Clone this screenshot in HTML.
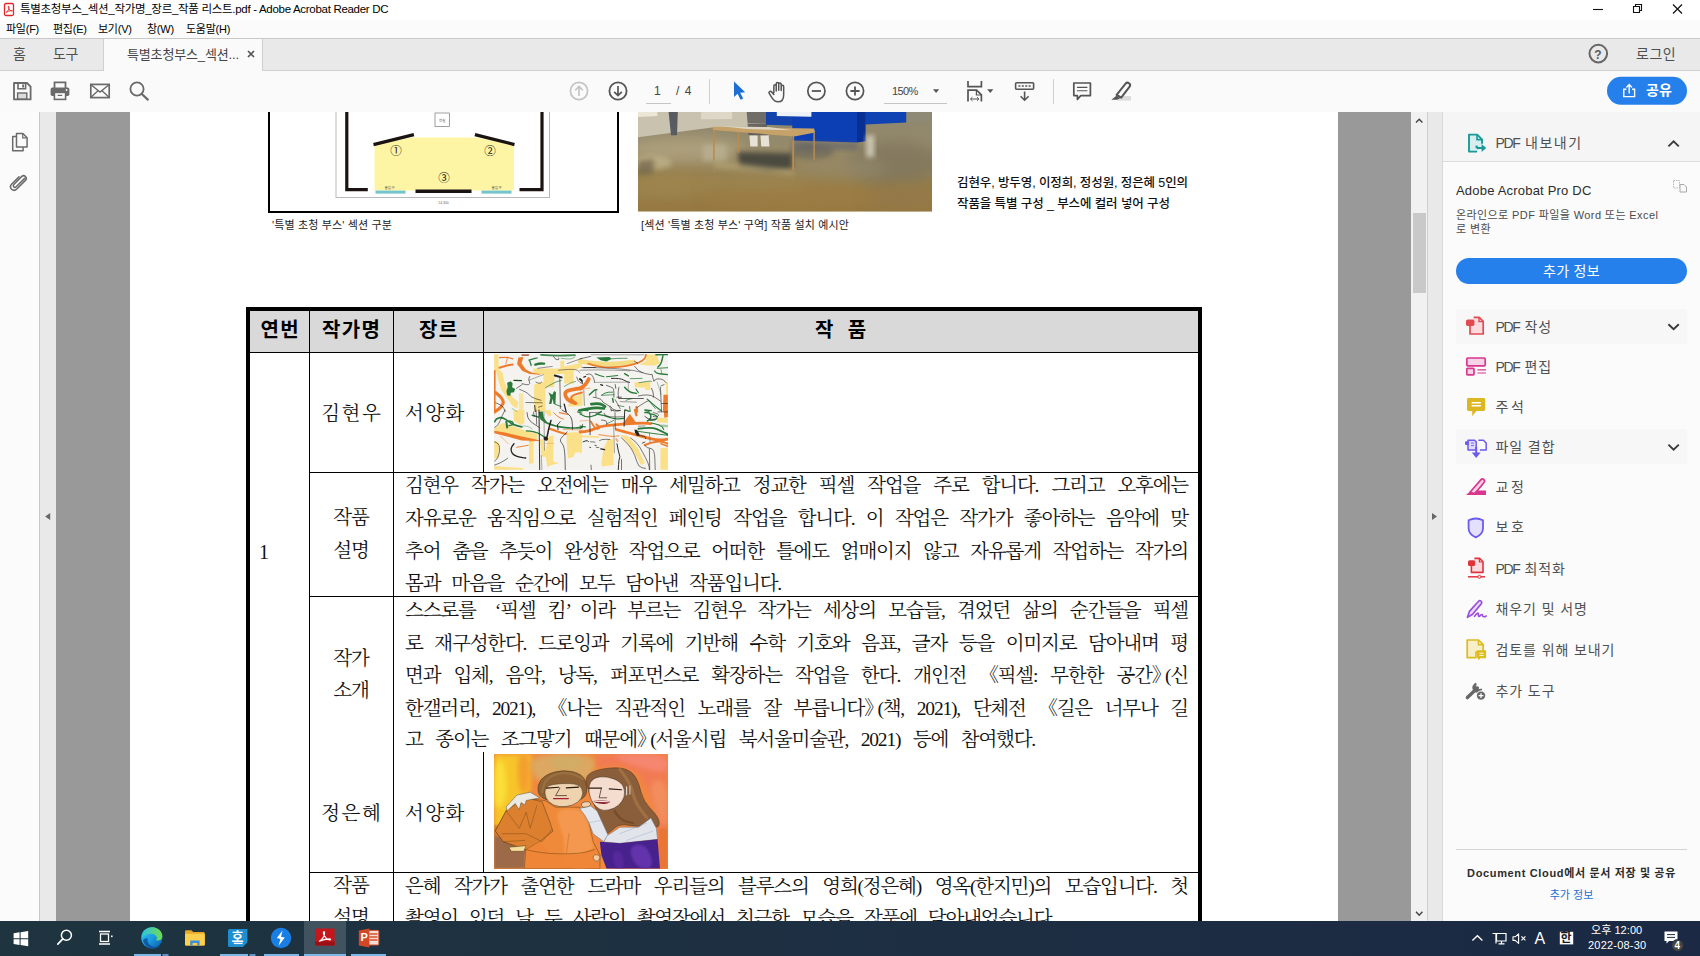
<!DOCTYPE html>
<html lang="ko">
<head>
<meta charset="utf-8">
<title>특별초청부스_섹션_작가명_장르_작품 리스트.pdf - Adobe Acrobat Reader DC</title>
<style>
*{box-sizing:border-box;margin:0;padding:0}
html,body{width:1700px;height:956px;overflow:hidden;background:#fff}
body{position:relative;font-family:"Liberation Sans","Noto Sans CJK KR","Noto Sans CJK SC","NanumGothic",sans-serif;color:#000}
.abs{position:absolute}
.ui{font-family:"Liberation Sans","Noto Sans CJK KR","Noto Sans CJK SC","NanumGothic",sans-serif}
.serif{font-family:"Liberation Serif","Noto Serif CJK KR","Noto Serif CJK SC",serif}
.t{position:absolute;white-space:nowrap;line-height:1}
svg{position:absolute;overflow:visible}
/* window chrome */
#titlebar{left:0;top:0;width:1700px;height:20px;background:#fff}
#menubar{left:0;top:20px;width:1700px;height:18px;background:#fbfbfb}
#tabbar{left:0;top:38px;width:1700px;height:33px;background:#e9e9e9;border-top:1px solid #c8c8c8;border-bottom:1px solid #cfcfcf}
#tabactive{left:103px;top:39px;width:160px;height:32px;background:#fafafa;border-left:1px solid #cfcfcf;border-right:1px solid #cfcfcf}
#toolbar{left:0;top:71px;width:1700px;height:41px;background:#fafafa}
/* main areas */
#leftnav{left:0;top:112px;width:40px;height:809px;background:#fbfbfb;border-right:1px solid #c8c8c8}
#leftstrip{left:40px;top:112px;width:16px;height:809px;background:#e9e9e9}
#docbg{left:56px;top:112px;width:1355px;height:809px;background:#999}
#page{left:130px;top:112px;width:1208px;height:809px;background:#fff}
#vscroll{left:1411px;top:112px;width:16px;height:809px;background:#f1f1f1}
#vthumb{left:1413px;top:213px;width:13px;height:80px;background:#c9c9c9}
#rightstrip{left:1427px;top:112px;width:15px;height:809px;background:#e9e9e9;border-left:1px solid #d0d0d0}
#rightpanel{left:1442px;top:112px;width:258px;height:809px;background:#fbfbfb;border-left:1px solid #d8d8d8}
#taskbar{left:0;top:921px;width:1700px;height:35px;background:#1c2e3e}
</style>
</head>
<body>
<!-- ======= WINDOW CHROME ======= -->
<div class="abs" id="titlebar"></div>
<div class="abs" id="menubar"></div>
<div class="abs" id="tabbar"></div>
<div class="abs" id="tabactive"></div>
<div class="abs" id="toolbar"></div>

<!-- ======= MAIN AREAS ======= -->
<div class="abs" id="leftnav"></div>
<div class="abs" id="leftstrip"></div>
<div class="abs" id="docbg"></div>
<div class="abs" id="page"></div>
<div class="abs" id="vscroll"></div>
<div class="abs" id="vthumb"></div>
<div class="abs" id="rightstrip"></div>
<div class="abs" id="rightpanel"></div>

<!-- CHROME-TEXT -->
<!-- title bar -->
<svg style="left:0;top:0" width="1700" height="112" viewBox="0 0 1700 112">
  <!-- pdf app icon -->
  <rect x="4.5" y="3.5" width="9" height="12" rx="1.5" fill="#fff" stroke="#e3252a" stroke-width="1.3"/>
  <path d="M6.2 12.3 C8 11.5 9.3 8.5 9 6.6 C8.8 5.6 8 6 8.3 7.2 C8.8 9.2 10.5 11 12 11.2 C12.8 11.3 12.6 10.4 11.6 10.5 C9.8 10.7 7.6 11.4 6.2 12.3Z" fill="none" stroke="#e3252a" stroke-width="0.9"/>
  <!-- window buttons -->
  <path d="M1593 9.5h10" stroke="#111" stroke-width="1.1"/>
  <path d="M1633.5 6.5h6v6h-6z M1635.5 6.5v-2h6v6h-2" fill="none" stroke="#111" stroke-width="1.1"/>
  <path d="M1673 4.5l9 9 M1682 4.5l-9 9" stroke="#111" stroke-width="1.2"/>
  <!-- help -->
  <circle cx="1598.300" cy="53.600" r="8.800" fill="none" stroke="#666" stroke-width="2"/>
  <text x="1598" y="58.5" text-anchor="middle" font-family="Liberation Sans, sans-serif" font-weight="bold" font-size="12" fill="#5a5a5a">?</text>
  <!-- tab close -->
  <path d="M248 51l6 6 M254 51l-6 6" stroke="#555" stroke-width="1.7"/>
  <!-- save icon -->
  <path d="M14 83h13l3.6 3.6V99.4H14z" fill="none" stroke="#6a6a6a" stroke-width="1.8" stroke-linejoin="round"/>
  <path d="M18 83.5v5.2h7.6v-5.2" fill="none" stroke="#6a6a6a" stroke-width="1.6"/>
  <rect x="22.2" y="84.5" width="1.8" height="3" fill="#6a6a6a"/>
  <rect x="17.6" y="93" width="9.2" height="6" fill="#dcdcdc" stroke="#6a6a6a" stroke-width="1.4"/>
  <!-- print icon -->
  <path d="M54.5 88v-5.6h11V88" fill="none" stroke="#6a6a6a" stroke-width="1.8"/>
  <rect x="50.6" y="87.6" width="18.8" height="8.4" rx="1.8" fill="#6a6a6a"/>
  <rect x="54.4" y="92.4" width="11.2" height="7" fill="#fafafa" stroke="#6a6a6a" stroke-width="1.6"/>
  <path d="M57.6 95.4h4.6" stroke="#6a6a6a" stroke-width="1.2"/>
  <circle cx="66.6" cy="90" r="0.9" fill="#fafafa"/>
  <!-- mail icon -->
  <rect x="90.8" y="84.4" width="18.4" height="13.2" fill="none" stroke="#6a6a6a" stroke-width="1.7"/>
  <path d="M91 84.8l9 7.2 9-7.2 M91 97.2l7-6.4 M109 97.2l-7-6.4" fill="none" stroke="#6a6a6a" stroke-width="1.4"/>
  <!-- search icon -->
  <circle cx="137" cy="89" r="6.6" fill="none" stroke="#6a6a6a" stroke-width="1.8"/>
  <path d="M141.8 94l6 5.6" stroke="#6a6a6a" stroke-width="2.2" stroke-linecap="round"/>
  <!-- page up (disabled) -->
  <circle cx="579" cy="91" r="8.6" fill="none" stroke="#c3c3c3" stroke-width="1.7"/>
  <path d="M579 96v-9.4 M575.2 90.2l3.8-3.8 3.8 3.8" fill="none" stroke="#c3c3c3" stroke-width="1.6"/>
  <!-- page down -->
  <circle cx="618" cy="91" r="8.6" fill="none" stroke="#555" stroke-width="1.8"/>
  <path d="M618 86v9.4 M614.2 91.8l3.8 3.8 3.8-3.8" fill="none" stroke="#555" stroke-width="1.7"/>
  <!-- page number underline -->
  <path d="M646 103.5h25" stroke="#c6c6c6" stroke-width="1"/>
  <!-- separators -->
  <path d="M709.5 79v25 M1053.5 79v25" stroke="#cfcfcf" stroke-width="1"/>
  <!-- pointer (blue) -->
  <path d="M734 81.6V97l3.6-3.2 3 6 2.6-1.2-3-5.8 5-.6z" fill="#1d6fd3"/>
  <!-- hand -->
  <path transform="translate(1.6,0.3) translate(777,92) scale(1.08) translate(-777,-92)" d="M772.6 92.4v-6.2c0-1.6 2.2-1.6 2.2 0v4.6 M774.8 90.2v-6c0-1.6 2.3-1.6 2.3 0v5.8 M777.1 90v-5.4c0-1.6 2.3-1.6 2.3 0v5.8 M779.4 90.4v-3.8c0-1.6 2.3-1.6 2.3 0v7.6c0 3.6-1.6 6.6-5.2 6.6-3 0-4.2-1.4-5.6-3.6l-2.6-4.2c-.9-1.5 1-2.6 2.1-1.400l2.200 2.400" fill="none" stroke="#555" stroke-width="1.4" stroke-linecap="round" stroke-linejoin="round"/>
  <!-- zoom out / in -->
  <circle cx="816.4" cy="91" r="8.6" fill="none" stroke="#555" stroke-width="1.7"/>
  <path d="M811.8 91h9.2" stroke="#555" stroke-width="1.8"/>
  <circle cx="855" cy="91" r="8.6" fill="none" stroke="#555" stroke-width="1.7"/>
  <path d="M850.4 91h9.2 M855 86.400v9.200" stroke="#555" stroke-width="1.8"/>
  <!-- zoom underline + arrow -->
  <path d="M884 103.5h63" stroke="#c6c6c6" stroke-width="1"/>
  <path d="M933 89.200h6.200l-3.100 3.800z" fill="#555"/>
  <!-- fit width icon -->
  <path d="M968 81v5.600h13.400V81" fill="none" stroke="#555" stroke-width="1.700"/>
  <path d="M968 101.600V90.200h8.600l4.800 4.600v6.800" fill="none" stroke="#555" stroke-width="1.700"/>
  <path d="M976.400 90.400v4.600h4.800" fill="none" stroke="#555" stroke-width="1.200"/>
  <path d="M970.600 99h8.200 M972.400 97.200l-1.900 1.800 1.900 1.800 M977 97.200l1.900 1.800-1.900 1.800" fill="none" stroke="#555" stroke-width="1"/>
  <path d="M987.200 89.200h6.200l-3.100 3.800z" fill="#555"/>
  <!-- scrolling/keyboard icon -->
  <rect x="1015.600" y="82.800" width="18" height="6.400" rx="1" fill="none" stroke="#555" stroke-width="1.600"/>
  <path d="M1018.400 86h2 M1021.800 86h2 M1025.200 86h2 M1028.600 86h2" stroke="#555" stroke-width="1.600"/>
  <path d="M1024.600 91.400v8.600 M1020.600 96.200l4 4 4-4" fill="none" stroke="#555" stroke-width="1.600"/>
  <!-- comment icon -->
  <path d="M1073.800 83h16.600v12.600h-9.600l-3.400 3.800v-3.800h-3.600z" fill="none" stroke="#555" stroke-width="1.700" stroke-linejoin="round"/>
  <path d="M1077 87.400h10.400 M1077 90.800h10.400" stroke="#555" stroke-width="1.100"/>
  <!-- highlighter -->
  <rect x="1117" y="96" width="14" height="4.600" fill="#dcdcdc"/>
  <path d="M1116.600 94.800l9-11.200c2-2.400 5.800.6 4 3l-8.400 11z" fill="#fafafa" stroke="#555" stroke-width="2" stroke-linejoin="round"/>
  <path d="M1116.400 95.800l3.800 2.400-3.400 1.600h-5.400z" fill="#555"/>
  <!-- share button -->
  <rect x="1607" y="76.800" width="80" height="28" rx="14" fill="#2680eb"/>
  <path transform="translate(1.200,1)" d="M1625.200 88.200h-2.600v7.400h10.800v-7.400h-2.600" fill="none" stroke="#fff" stroke-width="1.400"/>
  <path transform="translate(1.200,1)" d="M1628 92.400v-8.400 M1625.200 86.400l2.800-2.800 2.800 2.800" fill="none" stroke="#fff" stroke-width="1.400"/>
</svg>
<div class="t ui" style="left:20px;top:3.5px;font-size:11.5px;letter-spacing:-0.3px;color:#000" id="wtitle">특별초청부스_섹션_작가명_장르_작품 리스트.pdf - Adobe Acrobat Reader DC</div>
<div class="t ui" style="left:6px;top:23.5px;font-size:11px;letter-spacing:-0.25px" id="m1">파일(F)</div>
<div class="t ui" style="left:53px;top:23.5px;font-size:11px;letter-spacing:-0.25px" id="m2">편집(E)</div>
<div class="t ui" style="left:98px;top:23.5px;font-size:11px;letter-spacing:-0.25px" id="m3">보기(V)</div>
<div class="t ui" style="left:147px;top:23.5px;font-size:11px;letter-spacing:-0.25px" id="m4">창(W)</div>
<div class="t ui" style="left:186px;top:23.5px;font-size:11px;letter-spacing:-0.25px" id="m5">도움말(H)</div>
<div class="t ui" style="left:13px;top:47px;font-size:14px;color:#505050" id="tabhome">홈</div>
<div class="t ui" style="left:53px;top:47px;font-size:14px;color:#505050;letter-spacing:-0.4px" id="tabtools">도구</div>
<div class="t ui" style="left:127px;top:47.5px;font-size:13px;color:#444;letter-spacing:-0.15px" id="tabdoc">특별초청부스_섹션...</div>
<div class="t ui" style="left:1636px;top:47px;font-size:14px;color:#505050;letter-spacing:0.5px" id="login">로그인</div>
<div class="t ui" style="left:654px;top:85px;font-size:12px;color:#444" id="pgnum">1</div>
<div class="t ui" style="left:676px;top:85px;font-size:12px;color:#444;word-spacing:2px" id="pgtot">/ 4</div>
<div class="t ui" style="left:892px;top:85.5px;font-size:11px;color:#444;letter-spacing:-0.6px" id="zoomv">150%</div>
<div class="t ui" style="left:1646px;top:82.500px;font-size:14px;color:#fff;font-weight:700" id="sharet">공유</div>
<!-- /CHROME-TEXT -->

<!-- PAGE-CONTENT -->
<style>
.ln{position:absolute;background:#000}
.bt{position:absolute;white-space:nowrap;line-height:1;font-size:19.5px;letter-spacing:-1.2px;text-align:justify;text-align-last:justify;text-justify:inter-word;height:20px;color:#111}
.nb{display:inline-block;text-align:left;text-align-last:left;white-space:nowrap}
.rq{margin-right:-5px}
.lb{position:absolute;white-space:nowrap;line-height:1;font-size:19.5px;letter-spacing:-1.2px;color:#111;text-align:center}
.hd{position:absolute;white-space:nowrap;line-height:1;font-size:20px;font-weight:700;color:#000;text-align:center;letter-spacing:1.4px;text-indent:1.4px}
.cap{position:absolute;white-space:nowrap;line-height:1;font-size:11px;color:#222;letter-spacing:0.15px}
</style>
<div class="abs" id="pagecontent" style="left:0;top:112px;width:1412px;height:809px;overflow:hidden">
<div class="abs" style="left:0;top:-112px;width:1412px;height:956px">

<!-- floor plan box -->
<div class="abs" style="left:268px;top:60px;width:351px;height:152.500px;border:2px solid #000;background:#fff"></div>
<!-- FLOORPLAN -->
<svg style="left:269.5px;top:112px" width="348" height="99" viewBox="269.5 112 348 99">
  <rect x="335.500" y="100" width="213.500" height="97.500" fill="#fff" stroke="#b9b9b9" stroke-width="1"/>
  <polygon points="374,190.500 374,144.500 412,137.500 475.500,137.500 513.500,144.500 513.500,190.500" fill="#fdf5a3"/>
  <!-- outer walls -->
  <path d="M346.300 100V189.700H367.300" fill="none" stroke="#1a1311" stroke-width="3.200"/>
  <path d="M541.500 100V189.700H519" fill="none" stroke="#1a1311" stroke-width="3.200"/>
  <path d="M415 191.300H471" stroke="#1a1311" stroke-width="3.600"/>
  <path d="M373 144.600L413.400 134.600" stroke="#1a1311" stroke-width="3.200"/>
  <path d="M474.400 134.600L514 144.600" stroke="#1a1311" stroke-width="3.200"/>
  <rect x="375" y="190.600" width="30" height="3" fill="#74c4cb"/>
  <rect x="481" y="190.600" width="30" height="3" fill="#74c4cb"/>
  <rect x="434.500" y="113" width="14.500" height="13.500" fill="#fff" stroke="#777" stroke-width="0.700"/>
  <text x="441.700" y="121.500" font-size="3.500" text-anchor="middle" fill="#555" font-family="Liberation Sans, Noto Sans CJK KR, sans-serif">전실</text>
  <text x="389" y="189" font-size="3.600" text-anchor="middle" fill="#444" font-family="Liberation Sans, Noto Sans CJK KR, sans-serif">출입구</text>
  <text x="496" y="189" font-size="3.600" text-anchor="middle" fill="#444" font-family="Liberation Sans, Noto Sans CJK KR, sans-serif">출입구</text>
  <text x="443" y="204" font-size="3.400" text-anchor="middle" fill="#666" font-family="Liberation Sans, sans-serif">14,300</text>
  <g font-family="Liberation Sans, Noto Sans CJK KR, DejaVu Sans, sans-serif" font-size="11.500" text-anchor="middle" fill="#1a1a1a">
    <text x="395.400" y="154.500">①</text>
    <text x="489.600" y="154.500">②</text>
    <text x="443.500" y="182.300">③</text>
  </g>
</svg>

<!-- PHOTO -->
<svg style="left:638px;top:112px;overflow:hidden" width="294" height="99.5" viewBox="0 0 294 99.5"><defs><linearGradient id="flr" x1="0" y1="0" x2="0" y2="1"><stop offset="0" stop-color="#8e8770"/><stop offset="0.35" stop-color="#958a6a"/><stop offset="0.7" stop-color="#967e4a"/><stop offset="1" stop-color="#967840"/></linearGradient><filter id="pb1" x="-20%" y="-20%" width="140%" height="140%"><feGaussianBlur stdDeviation="0.6"/></filter><filter id="pb3" x="-30%" y="-30%" width="160%" height="160%"><feGaussianBlur stdDeviation="2.5"/></filter><filter id="pb6" x="-40%" y="-40%" width="180%" height="180%"><feGaussianBlur stdDeviation="7"/></filter><clipPath id="pclip"><rect x="0" y="0" width="294" height="99.5"/></clipPath></defs><g clip-path="url(#pclip)">
<rect x="0" y="0" width="294" height="100" fill="url(#flr)"/>
<ellipse cx="46.7" cy="37.9" rx="60.2" ry="12.8" fill="#b2a480" opacity="0.8" filter="url(#pb6)"/>
<ellipse cx="28.4" cy="72.6" rx="54.7" ry="12.8" fill="#a08650" opacity="0.7" filter="url(#pb6)"/>
<ellipse cx="156.1" cy="83.5" rx="91.2" ry="14.6" fill="#9c7e44" opacity="0.8" filter="url(#pb6)"/>
<ellipse cx="256.4" cy="50.7" rx="47.4" ry="21.9" fill="#80775f" opacity="0.8" filter="url(#pb6)"/>
<ellipse cx="201.7" cy="56.2" rx="47.4" ry="10.9" fill="#988c6e" opacity="0.6" filter="url(#pb6)"/>
<ellipse cx="265.5" cy="87.2" rx="36.5" ry="12.8" fill="#94784a" opacity="0.8" filter="url(#pb6)"/>
<ellipse cx="119.6" cy="68.9" rx="54.7" ry="7.3" fill="#a08c5c" opacity="0.5" filter="url(#pb6)"/>
<ellipse cx="13.9" cy="50.7" rx="20.1" ry="7.3" fill="#c2b68e" opacity="0.7" filter="url(#pb3)"/>
<ellipse cx="174.3" cy="39.8" rx="21.9" ry="7.3" fill="#6c675a" opacity="0.7" filter="url(#pb3)"/>
<polygon points="0.0,0.0 127.8,0.0 127.8,14.2 75.9,15.3 0.0,25.2" fill="#c9c2af" filter="url(#pb1)"/>
<polygon points="0.0,0.0 19.3,0.0 19.3,4.0 0.0,5.1" fill="#ece6d6"/>
<polygon points="63.1,0.0 94.1,0.0 94.1,6.9 63.1,7.3" fill="#e0dacb" opacity="0.9" filter="url(#pb1)"/>
<polygon points="268.2,0.0 292.9,0.0 292.9,8.8 268.2,10.2" fill="#8f8a74" filter="url(#pb1)"/>
<polygon points="30.6,0.0 39.8,0.0 39.0,23.3 33.0,23.3" fill="#565c62" filter="url(#pb1)"/>
<polygon points="108.7,0.0 127.8,0.0 127.8,11.7 109.6,11.3" fill="#6f6c68" filter="url(#pb1)"/>
<polygon points="111.4,23.3 119.6,23.3 119.6,34.6 112.3,34.6" fill="#e8e2d6" filter="url(#pb1)"/>
<polygon points="122.4,23.3 130.6,23.3 131.5,34.6 123.3,34.6" fill="#e8e2d6" filter="url(#pb1)"/>
<polygon points="109.6,11.7 128.7,11.7 129.6,23.3 110.5,23.3" fill="#5e5c58" opacity="0.9" filter="url(#pb1)"/>
<polygon points="127.8,0.0 176.1,0.0 176.1,14.2 127.8,12.8" fill="#1443ac"/>
<polygon points="227.2,0.0 268.2,0.0 268.2,10.6 227.2,12.4" fill="#0f42b2"/>
<polygon points="154.3,0.0 219.0,0.0 219.0,30.6 154.3,28.4" fill="#0c3eb4"/>
<polygon points="219.0,0.0 227.6,0.0 227.6,29.2 219.0,30.6" fill="#0a2f92"/>
<polygon points="138.8,0.0 173.4,0.0 173.4,4.7 138.8,4.0" fill="#eef1f5"/>
<polygon points="99.6,39.8 154.3,41.6 154.3,57.1 130.6,58.9 101.4,54.3" fill="#45453c" opacity="0.9" filter="url(#pb3)"/>
<polygon points="64.9,32.5 88.6,32.5 88.6,48.9 64.9,48.9" fill="#b9b193" opacity="0.8" filter="url(#pb3)"/>
<polygon points="228.1,23.3 236.3,23.3 236.3,45.2 228.1,45.2" fill="#d6d2be" opacity="0.85" filter="url(#pb3)"/>
<polygon points="154.3,28.8 219.9,31.0 219.9,37.9 154.3,37.0" fill="#55586a" opacity="0.5" filter="url(#pb3)"/>
<polygon points="75.9,48.9 156.1,58.0 156.1,63.5 75.9,56.2" fill="#b8a878" opacity="0.6" filter="url(#pb3)"/>
<polygon points="0.0,48.9 15.7,47.0 15.7,61.6 0.0,63.5" fill="#6e6248" opacity="0.7" filter="url(#pb3)"/>
<polygon points="74.9,14.8 176.1,16.6 177.1,20.6 156.1,24.4 74.9,18.1" fill="#c7a268"/>
<polygon points="83.2,14.2 130.6,15.0 154.3,18.2 108.7,17.1" fill="#ddd6c4"/>
<path d="M75.9 17.9 L75.9 48.0" fill="none" stroke="#b98c50" stroke-width="1.64" opacity="1"/>
<path d="M100.5 19.7 L100.5 40.7" fill="none" stroke="#b98c50" stroke-width="1.46" opacity="1"/>
<path d="M155.2 23.7 L155.2 58.0" fill="none" stroke="#b98c50" stroke-width="1.82" opacity="1"/>
<path d="M176.1 20.6 L176.1 48.0" fill="none" stroke="#b98c50" stroke-width="1.46" opacity="1"/>
<path d="M75.9 48.0 L75.9 61.6" fill="none" stroke="#a89060" stroke-width="1.09" opacity="0.5"/>
<path d="M155.2 58.0 L155.2 68.9" fill="none" stroke="#a89060" stroke-width="1.09" opacity="0.5"/>
</g></svg>
<div class="cap ui" style="left:272px;top:220px" id="cap1">'특별 초청 부스' 섹션 구분</div>
<div class="cap ui" style="left:641px;top:220px" id="cap2">[섹션 '특별 초청 부스' 구역] 작품 설치 예시안</div>
<div class="t ui" style="left:957px;top:176.5px;font-size:12.5px;font-weight:500;letter-spacing:-0.1px;color:#111" id="note1">김현우, 방두영, 이정희, 정성원, 정은혜 5인의</div>
<div class="t ui" style="left:957px;top:198px;font-size:12.5px;font-weight:500;letter-spacing:-0.1px;color:#111" id="note2">작품을 특별 구성 _ 부스에 컬러 넣어 구성</div>

<!-- table header bg -->
<div class="abs" style="left:250px;top:311px;width:948px;height:41px;background:#d9d9d9"></div>
<!-- outer thick borders -->
<div class="ln" style="left:246px;top:307px;width:956px;height:4px"></div>
<div class="ln" style="left:246px;top:307px;width:4px;height:700px"></div>
<div class="ln" style="left:1198px;top:307px;width:4px;height:700px"></div>
<!-- horizontal lines -->
<div class="ln" style="left:250px;top:351.5px;width:948px;height:1.3px"></div>
<div class="ln" style="left:309px;top:471.8px;width:889px;height:1.2px"></div>
<div class="ln" style="left:309px;top:596px;width:889px;height:1.2px"></div>
<div class="ln" style="left:309px;top:871.8px;width:889px;height:1.2px"></div>
<!-- vertical lines -->
<div class="ln" style="left:308.8px;top:311px;width:1.2px;height:700px"></div>
<div class="ln" style="left:392.8px;top:311px;width:1.2px;height:700px"></div>
<div class="ln" style="left:482.8px;top:311px;width:1.2px;height:161px"></div>
<div class="ln" style="left:482.8px;top:752px;width:1.2px;height:120px"></div>

<!-- header labels -->
<div class="hd ui" style="left:250px;top:320px;width:59px" id="h1">연번</div>
<div class="hd ui" style="left:309px;top:320px;width:84px" id="h2">작가명</div>
<div class="hd ui" style="left:393px;top:320px;width:90px" id="h3">장르</div>
<div class="hd ui" style="left:483px;top:320px;width:715px;word-spacing:6px" id="h4">작 품</div>

<!-- row 1 -->
<div class="lb serif" style="left:309px;top:403.5px;width:84px;letter-spacing:1.6px;text-indent:1.6px" id="n1">김현우</div>
<div class="lb serif" style="left:405px;top:403.5px;letter-spacing:1.4px" id="g1">서양화</div>
<!-- PAINTING1 -->
<svg style="left:494px;top:354px;overflow:hidden" width="174" height="116" viewBox="0 0 174 116"><defs><clipPath id="p1c"><rect width="174" height="116"/></clipPath></defs><g clip-path="url(#p1c)"><rect width="174" height="116" fill="#f4f3ef"/>
<path d="M0.2 0.2 L4.3 0.2 L4.9 15.6 L8.7 18.7 L9.9 26.2 L13.7 35.7 L18.7 43.2 L24.4 48.2 L23.1 54.5 L18.7 52.0 L12.4 43.2 L7.4 35.7 L4.3 26.2 L2.4 18.1 L0.2 16.8Z" fill="#fbe08a"/>
<path d="M39.4 14.6 L66.4 14.6 L66.4 6.8 L70.2 6.8 L70.2 12.4 L88.0 8.7 L88.0 12.4 L79.6 16.8 L79.6 29.4 L70.2 29.4 L70.2 20.0 L60.8 20.0 L60.1 33.2 L51.4 33.2 L51.4 57.6 L40.1 57.6 L40.1 30.6 L49.5 28.1 L49.5 20.6 L39.4 20.0Z" fill="#fbe08a"/>
<path d="M25.0 39.4 L29.4 39.4 L29.4 57.6 L25.0 57.6Z" fill="#fbe08a" opacity="0.75"/>
<path d="M76.5 43.2 L88.0 40.7 L88.0 52.0 L74.0 52.6Z" fill="#fbe08a"/>
<path d="M86.0 7.4 Q98.6 9.0 108.0 9.8 Q117.4 10.6 128.4 9.3 L139.4 8.0" fill="none" stroke="#f3dc84" stroke-width="4.55" stroke-linecap="round" stroke-linejoin="round"/>
<path d="M151.9 0.5 L162.0 0.5 L166.4 9.3 L160.1 11.8 L151.3 11.2 L145.6 10.6 L151.9 7.4Z" fill="#fbe08a"/>
<path d="M140.6 28.1 L156.3 28.1 L156.3 35.7 L151.3 36.3 L151.3 33.8 L140.6 33.2Z" fill="#fbe08a"/>
<path d="M172.0 28.1 L174.2 28.1 L174.2 41.9 L172.0 41.9Z" fill="#fbe08a"/>
<path d="M86.0 40.1 L88.5 40.1 L88.5 51.4 L86.0 51.4Z" fill="#fbe08a"/>
<path d="M19.4 56.0 L30.4 56.0 L30.4 69.0 L26.5 70.9 L20.0 67.0Z" fill="#fbe08a"/>
<path d="M0.3 74.8 L8.4 69.0 L19.4 72.2 L27.8 75.5 L43.4 80.0 L43.4 85.2 L27.8 84.5 L11.0 80.6 L0.3 77.4Z" fill="#fbe08a"/>
<path d="M0.3 87.1 L5.1 88.4 L4.5 104.0 L0.3 104.6Z" fill="#fbe08a"/>
<path d="M0.3 112.1 L29.1 114.0 L29.1 115.7 L0.3 115.7Z" fill="#fbe08a"/>
<path d="M35.0 85.8 L39.5 85.8 L39.5 109.2 L35.0 109.8Z" fill="#fbe08a"/>
<path d="M46.0 85.2 L49.2 85.2 L51.2 97.5 L54.4 82.6 L59.6 81.3 L59.3 107.2 L64.8 109.2 L57.7 111.1 L53.1 113.1 L51.8 102.7 L47.3 102.7Z" fill="#fbe08a"/>
<path d="M72.6 78.7 L82.3 78.0 L88.0 80.6 L88.0 97.5 L81.0 98.8 L79.7 102.7 L73.9 104.6 L72.6 88.4Z" fill="#fbe08a"/>
<path d="M49.2 56.0 L56.4 56.0 L57.7 61.2 L55.1 62.5Z" fill="#fbe08a"/>
<path d="M86.0 81.6 L104.8 81.9 L104.8 83.9 L86.0 83.2Z" fill="#fbe08a"/>
<path d="M86.0 83.2 L87.3 83.2 L87.3 99.5 L86.0 99.5Z" fill="#fbe08a"/>
<path d="M113.9 85.2 L119.1 85.2 L119.7 111.1 L108.0 112.4 L107.4 109.2 L109.3 94.9Z" fill="#fbe08a"/>
<path d="M126.2 81.0 L134.0 81.9 L144.4 94.9 L150.9 109.2 L147.0 111.1 L139.8 97.5 L131.4 86.5Z" fill="#fbe08a"/>
<path d="M166.4 94.3 L173.9 93.6 L173.9 115.7 L166.4 115.7Z" fill="#fbe08a"/>
<path d="M163.2 63.8 L173.9 63.8 L173.9 69.0 L163.2 68.3Z" fill="#fbe08a"/>
<path d="M0.8 16.8 L0.8 57.6" fill="none" stroke="#ee7b2c" stroke-width="1.64" stroke-linecap="round" stroke-linejoin="round"/>
<path d="M1.8 38.8 Q10.6 45.7 9.0 49.5 Q7.4 53.2 4.6 55.1 L1.8 57.0" fill="none" stroke="#ee7b2c" stroke-width="3.19" stroke-linecap="round" stroke-linejoin="round"/>
<path d="M5.5 3.6 Q13.7 3.0 16.2 4.0 L18.7 4.9" fill="none" stroke="#ee7b2c" stroke-width="1.27" stroke-linecap="round" stroke-linejoin="round"/>
<path d="M13.7 3.0 L11.8 9.9" fill="none" stroke="#ee7b2c" stroke-width="0.91" stroke-linecap="round" stroke-linejoin="round" opacity="0.8"/>
<path d="M5.5 13.7 Q12.4 11.5 15.6 11.0 L18.7 10.6" fill="none" stroke="#ee7b2c" stroke-width="2.00" stroke-linecap="round" stroke-linejoin="round"/>
<path d="M24.4 3.6 L29.4 3.0 L27.5 9.3 L31.9 15.6 L38.2 18.7 L46.3 20.0 L45.7 20.7 L35.7 20.0 L28.1 16.8 L23.1 9.9Z" fill="#ee7b2c"/>
<path d="M88.0 34.1 Q75.2 35.7 72.7 37.2 Q70.2 38.8 71.8 42.6 Q73.3 46.3 77.4 47.7 L81.5 49.2" fill="none" stroke="#ee7b2c" stroke-width="3.64" stroke-linecap="round" stroke-linejoin="round"/>
<path d="M88.0 38.5 Q79.0 40.7 77.7 42.6 Q76.5 44.5 78.0 45.7 L79.6 47.0" fill="none" stroke="#ee7b2c" stroke-width="2.00" stroke-linecap="round" stroke-linejoin="round"/>
<path d="M28.1 1.1 L34.4 1.1" fill="none" stroke="#b07050" stroke-width="1.64" stroke-linecap="round" stroke-linejoin="round"/>
<path d="M94.2 9.6 Q104.8 12.8 111.1 13.2 Q117.4 13.7 125.2 12.9 Q133.1 12.1 139.4 10.4 Q145.6 8.7 148.5 6.5 Q151.3 4.3 151.6 2.4 L151.9 0.5" fill="none" stroke="#ee7b2c" stroke-width="1.64" stroke-linecap="round" stroke-linejoin="round"/>
<path d="M86.0 34.7 Q91.0 31.9 92.9 28.4 L94.8 25.0" fill="none" stroke="#ee7b2c" stroke-width="3.64" stroke-linecap="round" stroke-linejoin="round"/>
<path d="M89.8 35.0 L96.0 34.1" fill="none" stroke="#ee7b2c" stroke-width="1.09" stroke-linecap="round" stroke-linejoin="round" opacity="0.5"/>
<path d="M169.5 40.7 L173.9 40.7 L173.9 57.6 L168.9 57.6Z" fill="#ee7b2c"/>
<path d="M142.5 53.2 L143.1 57.6" fill="none" stroke="#ee7b2c" stroke-width="2.28" stroke-linecap="round" stroke-linejoin="round"/>
<path d="M0.3 56.0 L4.5 56.0 L0.3 60.5Z" fill="#ee7b2c"/>
<path d="M0.3 76.8 L11.0 78.4 L27.8 82.6 L43.4 85.8 L44.7 87.1 L27.8 86.5 L11.0 81.9 L0.3 79.3Z" fill="#ee7b2c"/>
<path d="M6.4 81.9 L14.2 89.7" fill="none" stroke="#ee7b2c" stroke-width="0.94" stroke-linecap="round" stroke-linejoin="round" opacity="0.5"/>
<path d="M22.6 93.3 L34.3 91.3" fill="none" stroke="#ee7b2c" stroke-width="0.94" stroke-linecap="round" stroke-linejoin="round"/>
<path d="M35.6 87.1 L44.7 86.5" fill="none" stroke="#ee7b2c" stroke-width="0.60" stroke-linecap="round" stroke-linejoin="round"/>
<path d="M59.6 58.6 Q62.9 62.5 66.1 63.8 L69.3 65.1" fill="none" stroke="#ee7b2c" stroke-width="0.94" stroke-linecap="round" stroke-linejoin="round"/>
<path d="M65.4 58.6 L73.9 60.5" fill="none" stroke="#ee7b2c" stroke-width="1.13" stroke-linecap="round" stroke-linejoin="round"/>
<path d="M55.7 74.8 Q62.9 77.4 67.4 78.7 L71.9 80.0" fill="none" stroke="#ee7b2c" stroke-width="2.07" stroke-linecap="round" stroke-linejoin="round"/>
<path d="M69.3 75.5 L88.0 76.1" fill="none" stroke="#ee7b2c" stroke-width="0.94" stroke-linecap="round" stroke-linejoin="round" opacity="0.6"/>
<path d="M51.2 89.4 L59.6 89.4" fill="none" stroke="#ee7b2c" stroke-width="0.60" stroke-linecap="round" stroke-linejoin="round" opacity="0.6"/>
<path d="M135.9 59.9 L142.4 69.0 L128.8 69.6Z" fill="#ee7b2c"/>
<path d="M141.1 56.0 L142.4 61.2" fill="none" stroke="#ee7b2c" stroke-width="2.35" stroke-linecap="round" stroke-linejoin="round"/>
<path d="M86.0 78.0 Q95.7 77.4 100.6 74.8 Q105.5 72.2 112.6 71.6 Q119.7 70.9 125.6 70.3 Q131.4 69.6 141.1 69.3 Q150.9 69.0 153.8 69.3 L156.7 69.6" fill="none" stroke="#ee7b2c" stroke-width="2.82" stroke-linecap="round" stroke-linejoin="round"/>
<path d="M97.0 67.7 Q100.9 75.5 103.8 74.8 Q106.8 74.2 104.5 72.2 L102.2 70.3" fill="none" stroke="#ee7b2c" stroke-width="1.88" stroke-linecap="round" stroke-linejoin="round"/>
<path d="M86.0 67.0 L94.4 66.4" fill="none" stroke="#ee7b2c" stroke-width="0.94" stroke-linecap="round" stroke-linejoin="round" opacity="0.5"/>
<path d="M122.3 75.5 Q131.4 78.0 135.3 79.0 Q139.2 80.0 145.0 81.6 Q150.9 83.2 157.3 84.9 Q163.8 86.5 168.8 85.8 L173.9 85.2" fill="none" stroke="#ee7b2c" stroke-width="2.82" stroke-linecap="round" stroke-linejoin="round"/>
<path d="M104.8 80.6 Q117.1 82.6 121.0 82.3 L124.9 81.9" fill="none" stroke="#ee7b2c" stroke-width="1.13" stroke-linecap="round" stroke-linejoin="round" opacity="0.7"/>
<path d="M122.3 84.5 Q124.9 87.1 123.9 87.5 Q123.0 87.8 122.5 86.5 L122.0 85.2" fill="none" stroke="#ee7b2c" stroke-width="0.75" stroke-linecap="round" stroke-linejoin="round"/>
<path d="M150.9 91.0 Q157.3 88.4 162.2 87.8 Q167.1 87.1 170.5 88.4 L173.9 89.7" fill="none" stroke="#ee7b2c" stroke-width="2.07" stroke-linecap="round" stroke-linejoin="round"/>
<path d="M167.1 89.7 L173.9 92.3" fill="none" stroke="#ee7b2c" stroke-width="1.69" stroke-linecap="round" stroke-linejoin="round"/>
<path d="M169.7 56.0 L173.9 56.0 L173.9 63.1 L170.3 63.8Z" fill="#ee7b2c"/>
<path d="M13.1 28.8 L16.8 27.2 L18.7 29.4 L18.1 33.2 L21.2 35.0 L20.0 38.2 L16.8 38.8 L16.2 41.9 L13.1 41.3 L12.4 36.9 L13.7 33.2Z" fill="#2a7a3c"/>
<path d="M20.0 26.4 L27.5 26.6" fill="none" stroke="#1c4a28" stroke-width="1.27" stroke-linecap="round" stroke-linejoin="round"/>
<path d="M35.0 6.2 Q38.8 4.8 41.0 4.4 L43.2 4.0" fill="none" stroke="#2a7a3c" stroke-width="1.27" stroke-linecap="round" stroke-linejoin="round"/>
<path d="M35.7 6.8 L37.2 11.5" fill="none" stroke="#2a7a3c" stroke-width="1.27" stroke-linecap="round" stroke-linejoin="round"/>
<path d="M41.3 10.6 Q45.7 9.3 47.9 9.5 L50.1 9.6" fill="none" stroke="#2a7a3c" stroke-width="2.37" stroke-linecap="round" stroke-linejoin="round"/>
<path d="M47.0 0.8 Q60.8 1.9 70.8 1.5 L80.9 1.1" fill="none" stroke="#2a7a3c" stroke-width="1.82" stroke-linecap="round" stroke-linejoin="round" opacity="0.85"/>
<path d="M67.1 4.3 Q76.5 5.7 78.7 4.3 L80.9 3.0" fill="none" stroke="#2a7a3c" stroke-width="0.73" stroke-linecap="round" stroke-linejoin="round" opacity="0.7"/>
<path d="M51.4 33.8 Q60.8 28.1 63.9 27.3 L67.1 26.6" fill="none" stroke="#2a7a3c" stroke-width="0.73" stroke-linecap="round" stroke-linejoin="round"/>
<path d="M55.1 50.1 L56.4 43.2 L54.5 38.2 L58.3 40.7 L60.1 36.9 L62.0 38.2 L61.4 50.1 L59.5 50.1 L58.9 44.5 L57.3 50.1Z" fill="#2a7a3c"/>
<path d="M60.8 50.1 L67.1 52.6" fill="none" stroke="#2a7a3c" stroke-width="0.91" stroke-linecap="round" stroke-linejoin="round"/>
<path d="M70.2 32.5 Q76.5 28.8 79.0 28.1 L81.5 27.5" fill="none" stroke="#2a7a3c" stroke-width="0.60" stroke-linecap="round" stroke-linejoin="round"/>
<path d="M18.1 54.5 L23.1 57.6" fill="none" stroke="#7fb889" stroke-width="0.73" stroke-linecap="round" stroke-linejoin="round"/>
<path d="M84.6 56.4 L88.0 55.8" fill="none" stroke="#2a7a3c" stroke-width="1.82" stroke-linecap="round" stroke-linejoin="round"/>
<path d="M102.3 3.6 L115.5 3.0 L117.4 4.9 L112.4 7.4 L106.7 6.2Z" fill="#2a7a3c"/>
<path d="M116.1 4.9 Q123.7 4.3 128.4 4.3 L133.1 4.3" fill="none" stroke="#2a7a3c" stroke-width="0.73" stroke-linecap="round" stroke-linejoin="round"/>
<path d="M162.0 0.8 L174.2 0.5" fill="none" stroke="#2a7a3c" stroke-width="1.64" stroke-linecap="round" stroke-linejoin="round"/>
<path d="M168.9 1.8 Q167.6 9.3 165.7 11.2 L163.8 13.1" fill="none" stroke="#2a7a3c" stroke-width="1.46" stroke-linecap="round" stroke-linejoin="round"/>
<path d="M160.7 16.8 Q161.3 19.3 167.8 20.0 L174.2 20.6" fill="none" stroke="#2a7a3c" stroke-width="1.27" stroke-linecap="round" stroke-linejoin="round"/>
<path d="M163.2 14.3 L174.2 13.7" fill="none" stroke="#2a7a3c" stroke-width="0.91" stroke-linecap="round" stroke-linejoin="round"/>
<path d="M167.0 15.6 L167.6 19.3" fill="none" stroke="#2a7a3c" stroke-width="0.60" stroke-linecap="round" stroke-linejoin="round"/>
<path d="M101.1 19.7 Q106.7 21.9 108.3 22.3 L109.9 22.8" fill="none" stroke="#2a7a3c" stroke-width="1.09" stroke-linecap="round" stroke-linejoin="round"/>
<path d="M112.4 22.8 L123.7 21.5" fill="none" stroke="#2a7a3c" stroke-width="1.09" stroke-linecap="round" stroke-linejoin="round"/>
<path d="M130.6 19.7 L134.3 21.9" fill="none" stroke="#2a7a3c" stroke-width="1.46" stroke-linecap="round" stroke-linejoin="round"/>
<path d="M136.2 24.7 L148.1 24.4" fill="none" stroke="#2a7a3c" stroke-width="0.91" stroke-linecap="round" stroke-linejoin="round" opacity="0.8"/>
<path d="M145.0 28.8 Q155.1 26.9 156.3 27.2 L157.6 27.5" fill="none" stroke="#2a7a3c" stroke-width="0.73" stroke-linecap="round" stroke-linejoin="round"/>
<path d="M95.4 40.7 Q100.4 35.7 101.7 35.7 L102.9 35.7" fill="none" stroke="#2a7a3c" stroke-width="1.46" stroke-linecap="round" stroke-linejoin="round"/>
<path d="M107.3 41.3 Q111.1 38.2 114.9 38.2 L118.6 38.2" fill="none" stroke="#2a7a3c" stroke-width="0.91" stroke-linecap="round" stroke-linejoin="round"/>
<path d="M108.0 41.3 L119.9 40.7" fill="none" stroke="#2a7a3c" stroke-width="0.73" stroke-linecap="round" stroke-linejoin="round"/>
<path d="M121.2 30.6 L121.8 34.4" fill="none" stroke="#2a7a3c" stroke-width="0.91" stroke-linecap="round" stroke-linejoin="round"/>
<path d="M130.6 33.2 Q135.0 38.2 138.7 38.8 L142.5 39.4" fill="none" stroke="#2a7a3c" stroke-width="1.46" stroke-linecap="round" stroke-linejoin="round"/>
<path d="M141.9 35.0 L144.4 38.8" fill="none" stroke="#2a7a3c" stroke-width="1.09" stroke-linecap="round" stroke-linejoin="round"/>
<path d="M118.6 44.5 L119.3 48.2" fill="none" stroke="#2a7a3c" stroke-width="1.46" stroke-linecap="round" stroke-linejoin="round"/>
<path d="M97.3 50.1 Q104.8 48.8 108.0 50.7 L111.1 52.6" fill="none" stroke="#2a7a3c" stroke-width="2.73" stroke-linecap="round" stroke-linejoin="round"/>
<path d="M86.0 56.4 Q98.6 53.2 104.2 53.9 L109.9 54.5" fill="none" stroke="#2a7a3c" stroke-width="2.73" stroke-linecap="round" stroke-linejoin="round"/>
<path d="M153.2 45.1 Q160.1 51.4 163.5 53.9 L167.0 56.4" fill="none" stroke="#2a7a3c" stroke-width="1.27" stroke-linecap="round" stroke-linejoin="round"/>
<path d="M155.1 47.0 L161.3 54.5" fill="none" stroke="#2a7a3c" stroke-width="0.73" stroke-linecap="round" stroke-linejoin="round"/>
<path d="M151.3 56.4 L155.1 57.6" fill="none" stroke="#2a7a3c" stroke-width="1.09" stroke-linecap="round" stroke-linejoin="round"/>
<path d="M123.7 51.4 L129.9 52.6" fill="none" stroke="#2a7a3c" stroke-width="0.73" stroke-linecap="round" stroke-linejoin="round"/>
<path d="M135.6 52.6 L136.2 57.6" fill="none" stroke="#2a7a3c" stroke-width="0.91" stroke-linecap="round" stroke-linejoin="round"/>
<path d="M131.8 46.3 L138.1 44.5" fill="none" stroke="#2a7a3c" stroke-width="0.73" stroke-linecap="round" stroke-linejoin="round"/>
<path d="M163.2 28.1 Q165.7 35.7 166.4 38.2 L167.0 40.7" fill="none" stroke="#6aa878" stroke-width="0.60" stroke-linecap="round" stroke-linejoin="round"/>
<path d="M0.6 67.7 Q1.9 64.4 5.1 63.8 Q8.4 63.1 11.6 65.4 Q14.9 67.7 17.1 69.3 Q19.4 70.9 23.6 71.9 L27.8 72.9" fill="none" stroke="#2a7a3c" stroke-width="1.69" stroke-linecap="round" stroke-linejoin="round"/>
<path d="M12.3 67.7 L13.2 73.5" fill="none" stroke="#2a7a3c" stroke-width="2.07" stroke-linecap="round" stroke-linejoin="round"/>
<path d="M14.2 67.0 Q18.8 67.0 19.1 69.0 Q19.4 70.9 17.1 71.2 L14.9 71.6" fill="none" stroke="#2a7a3c" stroke-width="1.32" stroke-linecap="round" stroke-linejoin="round"/>
<path d="M28.5 72.2 Q31.7 71.2 35.0 73.0 L38.2 74.8" fill="none" stroke="#6aa878" stroke-width="0.60" stroke-linecap="round" stroke-linejoin="round"/>
<path d="M32.4 76.8 Q40.2 77.4 43.7 79.0 Q47.3 80.6 49.6 82.6 L51.8 84.5" fill="none" stroke="#2a7a3c" stroke-width="1.32" stroke-linecap="round" stroke-linejoin="round"/>
<path d="M44.7 57.9 L48.6 57.3 L49.9 63.8 L53.1 68.3 L51.2 69.0 L46.6 65.7 L45.3 61.8Z" fill="#2a7a3c"/>
<path d="M38.2 61.2 L44.7 63.1" fill="none" stroke="#2a7a3c" stroke-width="1.50" stroke-linecap="round" stroke-linejoin="round"/>
<path d="M51.2 68.3 Q59.6 71.9 64.5 72.7 Q69.3 73.5 74.2 73.8 Q79.1 74.2 83.5 73.8 L88.0 73.5" fill="none" stroke="#2a7a3c" stroke-width="1.69" stroke-linecap="round" stroke-linejoin="round"/>
<path d="M83.6 57.9 L88.0 59.2" fill="none" stroke="#2a7a3c" stroke-width="1.13" stroke-linecap="round" stroke-linejoin="round"/>
<path d="M86.0 59.9 Q92.5 63.8 97.3 62.5 Q102.2 61.2 104.8 59.2 L107.4 57.3" fill="none" stroke="#2a7a3c" stroke-width="1.13" stroke-linecap="round" stroke-linejoin="round"/>
<path d="M102.2 59.9 Q111.9 61.8 115.8 63.5 Q119.7 65.1 124.9 64.8 L130.1 64.4" fill="none" stroke="#2a7a3c" stroke-width="1.32" stroke-linecap="round" stroke-linejoin="round"/>
<path d="M113.2 69.6 L119.7 66.4" fill="none" stroke="#2a7a3c" stroke-width="0.75" stroke-linecap="round" stroke-linejoin="round"/>
<path d="M86.0 72.2 L91.2 72.9" fill="none" stroke="#2a7a3c" stroke-width="1.32" stroke-linecap="round" stroke-linejoin="round"/>
<path d="M150.9 58.6 Q156.0 57.9 156.7 61.2 Q157.3 64.4 155.4 65.7 L153.4 67.0" fill="none" stroke="#2a7a3c" stroke-width="1.50" stroke-linecap="round" stroke-linejoin="round"/>
<path d="M156.7 59.9 Q163.8 61.2 163.2 63.5 Q162.5 65.7 159.3 66.1 L156.0 66.4" fill="none" stroke="#2a7a3c" stroke-width="1.13" stroke-linecap="round" stroke-linejoin="round"/>
<path d="M144.4 74.8 Q157.3 72.9 162.2 74.8 Q167.1 76.8 170.5 78.7 L173.9 80.6" fill="none" stroke="#2a7a3c" stroke-width="1.88" stroke-linecap="round" stroke-linejoin="round"/>
<path d="M157.3 69.0 Q167.1 70.9 168.4 73.2 L169.7 75.5" fill="none" stroke="#2a7a3c" stroke-width="1.13" stroke-linecap="round" stroke-linejoin="round"/>
<path d="M144.4 77.4 Q157.3 79.3 165.6 80.3 L173.9 81.3" fill="none" stroke="#2a7a3c" stroke-width="0.94" stroke-linecap="round" stroke-linejoin="round"/>
<path d="M167.1 71.6 L173.9 72.2" fill="none" stroke="#6aa878" stroke-width="2.35" stroke-linecap="round" stroke-linejoin="round" opacity="0.6"/>
<path d="M150.9 56.0 L157.3 56.6" fill="none" stroke="#2a7a3c" stroke-width="1.32" stroke-linecap="round" stroke-linejoin="round"/>
<path d="M86.0 56.0 L93.8 56.6" fill="none" stroke="#2a7a3c" stroke-width="1.50" stroke-linecap="round" stroke-linejoin="round"/>
<path d="M131.4 56.0 L135.3 57.3" fill="none" stroke="#2a7a3c" stroke-width="1.32" stroke-linecap="round" stroke-linejoin="round"/>
<path d="M60.8 21.5 L67.7 23.4" fill="none" stroke="#222" stroke-width="2.00" stroke-linecap="round" stroke-linejoin="round"/>
<path d="M65.8 23.1 L66.4 54.5" fill="none" stroke="#222" stroke-width="0.64" stroke-linecap="round" stroke-linejoin="round"/>
<path d="M28.1 29.7 Q33.2 31.3 34.7 30.6 Q36.3 30.0 35.4 27.8 Q34.4 25.6 35.0 24.1 L35.7 22.5" fill="none" stroke="#222" stroke-width="0.60" stroke-linecap="round" stroke-linejoin="round"/>
<path d="M35.0 26.2 L49.5 20.6" fill="none" stroke="#222" stroke-width="0.60" stroke-linecap="round" stroke-linejoin="round" opacity="0.6"/>
<path d="M41.9 28.1 Q45.1 30.0 46.3 29.1 L47.6 28.1" fill="none" stroke="#222" stroke-width="0.60" stroke-linecap="round" stroke-linejoin="round"/>
<path d="M22.5 34.4 L28.1 30.6" fill="none" stroke="#222" stroke-width="0.60" stroke-linecap="round" stroke-linejoin="round"/>
<path d="M25.6 35.4 Q33.2 38.2 35.0 40.7 Q36.9 43.2 41.9 44.8 L47.0 46.3" fill="none" stroke="#222" stroke-width="0.60" stroke-linecap="round" stroke-linejoin="round"/>
<path d="M31.9 48.5 L48.2 48.8" fill="none" stroke="#222" stroke-width="0.73" stroke-linecap="round" stroke-linejoin="round" opacity="0.8"/>
<path d="M40.7 51.4 L41.3 57.6" fill="none" stroke="#222" stroke-width="0.91" stroke-linecap="round" stroke-linejoin="round"/>
<path d="M44.5 53.2 L48.2 52.0" fill="none" stroke="#222" stroke-width="0.60" stroke-linecap="round" stroke-linejoin="round"/>
<path d="M43.8 14.3 L58.3 12.4" fill="none" stroke="#222" stroke-width="0.60" stroke-linecap="round" stroke-linejoin="round" opacity="0.8"/>
<path d="M64.5 16.2 Q81.5 14.3 83.7 16.5 L85.9 18.7" fill="none" stroke="#222" stroke-width="0.60" stroke-linecap="round" stroke-linejoin="round" opacity="0.8"/>
<path d="M73.3 9.6 L88.0 4.3" fill="none" stroke="#222" stroke-width="0.60" stroke-linecap="round" stroke-linejoin="round" opacity="0.8"/>
<path d="M59.5 2.4 Q60.8 5.5 63.0 5.7 Q65.2 5.8 64.9 4.9 L64.5 4.0" fill="none" stroke="#222" stroke-width="0.60" stroke-linecap="round" stroke-linejoin="round"/>
<path d="M82.7 23.1 Q84.0 27.5 86.0 28.4 L88.0 29.4" fill="none" stroke="#222" stroke-width="0.60" stroke-linecap="round" stroke-linejoin="round"/>
<path d="M85.9 25.0 L88.0 26.9" fill="none" stroke="#222" stroke-width="1.82" stroke-linecap="round" stroke-linejoin="round"/>
<path d="M1.8 48.8 Q8.7 51.4 9.9 54.5 L11.2 57.6" fill="none" stroke="#222" stroke-width="0.60" stroke-linecap="round" stroke-linejoin="round"/>
<path d="M70.2 50.1 L72.1 57.6" fill="none" stroke="#222" stroke-width="1.27" stroke-linecap="round" stroke-linejoin="round"/>
<path d="M97.3 0.8 L150.0 0.8" fill="none" stroke="#888" stroke-width="0.73" stroke-linecap="round" stroke-linejoin="round"/>
<path d="M86.0 4.9 L96.7 2.4" fill="none" stroke="#222" stroke-width="0.60" stroke-linecap="round" stroke-linejoin="round"/>
<path d="M87.9 13.4 Q111.1 13.7 125.2 14.9 Q139.4 16.2 144.1 17.5 L148.8 18.7" fill="none" stroke="#222" stroke-width="0.60" stroke-linecap="round" stroke-linejoin="round" opacity="0.85"/>
<path d="M86.0 16.2 Q104.8 15.6 120.5 16.2 L136.2 16.8" fill="none" stroke="#222" stroke-width="0.60" stroke-linecap="round" stroke-linejoin="round" opacity="0.7"/>
<path d="M89.8 13.7 L101.7 13.4" fill="none" stroke="#222" stroke-width="0.73" stroke-linecap="round" stroke-linejoin="round"/>
<path d="M140.6 7.4 L143.8 9.3" fill="none" stroke="#222" stroke-width="0.60" stroke-linecap="round" stroke-linejoin="round"/>
<path d="M140.6 12.4 Q144.4 17.5 148.5 18.7 Q152.5 20.0 155.1 20.3 L157.6 20.6" fill="none" stroke="#222" stroke-width="0.60" stroke-linecap="round" stroke-linejoin="round"/>
<path d="M158.2 20.6 Q158.8 24.4 159.4 25.6 L160.1 26.9" fill="none" stroke="#222" stroke-width="0.60" stroke-linecap="round" stroke-linejoin="round"/>
<path d="M159.4 26.9 Q163.2 23.7 166.7 25.0 Q170.1 26.2 171.1 27.5 L172.0 28.8" fill="none" stroke="#222" stroke-width="0.60" stroke-linecap="round" stroke-linejoin="round"/>
<path d="M166.4 33.2 L167.6 57.6" fill="none" stroke="#222" stroke-width="0.60" stroke-linecap="round" stroke-linejoin="round"/>
<path d="M167.0 31.9 L170.1 30.6" fill="none" stroke="#222" stroke-width="0.60" stroke-linecap="round" stroke-linejoin="round"/>
<path d="M87.3 25.6 L88.5 29.4" fill="none" stroke="#222" stroke-width="0.91" stroke-linecap="round" stroke-linejoin="round"/>
<path d="M89.8 23.1 L91.6 22.5" fill="none" stroke="#222" stroke-width="1.27" stroke-linecap="round" stroke-linejoin="round"/>
<path d="M92.3 20.6 Q96.7 18.7 98.6 22.2 Q100.4 25.6 100.4 27.0 L100.4 28.4" fill="none" stroke="#222" stroke-width="0.60" stroke-linecap="round" stroke-linejoin="round"/>
<path d="M100.4 28.4 L135.0 28.1" fill="none" stroke="#777" stroke-width="0.60" stroke-linecap="round" stroke-linejoin="round"/>
<path d="M106.7 30.6 L108.6 31.3" fill="none" stroke="#222" stroke-width="1.27" stroke-linecap="round" stroke-linejoin="round"/>
<path d="M112.4 31.3 Q117.4 33.2 118.6 33.8 Q119.9 34.4 119.9 38.8 L119.9 43.2" fill="none" stroke="#222" stroke-width="0.64" stroke-linecap="round" stroke-linejoin="round"/>
<path d="M117.4 24.4 Q126.2 24.1 129.3 25.8 Q132.5 27.5 134.0 28.0 L135.6 28.4" fill="none" stroke="#222" stroke-width="0.91" stroke-linecap="round" stroke-linejoin="round"/>
<path d="M134.3 29.4 L134.3 35.7" fill="none" stroke="#777" stroke-width="0.60" stroke-linecap="round" stroke-linejoin="round"/>
<path d="M124.9 33.2 Q123.7 38.8 124.3 41.6 L124.9 44.5" fill="none" stroke="#222" stroke-width="0.60" stroke-linecap="round" stroke-linejoin="round"/>
<path d="M123.0 43.2 L127.4 43.2" fill="none" stroke="#222" stroke-width="0.73" stroke-linecap="round" stroke-linejoin="round"/>
<path d="M101.7 36.3 L102.0 43.2" fill="none" stroke="#777" stroke-width="0.91" stroke-linecap="round" stroke-linejoin="round"/>
<path d="M99.2 43.2 Q107.3 44.5 107.7 46.3 Q108.0 48.2 112.1 50.1 Q116.1 52.0 116.8 54.5 L117.4 57.0" fill="none" stroke="#222" stroke-width="0.60" stroke-linecap="round" stroke-linejoin="round"/>
<path d="M89.8 36.3 L90.4 51.4" fill="none" stroke="#777" stroke-width="0.73" stroke-linecap="round" stroke-linejoin="round"/>
<path d="M124.9 44.5 L149.4 44.5" fill="none" stroke="#222" stroke-width="0.73" stroke-linecap="round" stroke-linejoin="round"/>
<path d="M126.2 47.6 L142.5 48.2" fill="none" stroke="#222" stroke-width="0.60" stroke-linecap="round" stroke-linejoin="round" opacity="0.7"/>
<path d="M157.6 34.4 Q159.4 38.2 159.4 40.7 L159.4 43.2" fill="none" stroke="#222" stroke-width="0.64" stroke-linecap="round" stroke-linejoin="round"/>
<path d="M144.4 41.9 Q155.1 39.4 160.7 43.2 L166.4 47.0" fill="none" stroke="#222" stroke-width="0.60" stroke-linecap="round" stroke-linejoin="round"/>
<path d="M142.5 53.9 Q151.9 47.6 153.2 47.3 L154.4 47.0" fill="none" stroke="#222" stroke-width="0.60" stroke-linecap="round" stroke-linejoin="round"/>
<path d="M121.2 45.7 Q123.7 50.1 124.9 52.3 L126.2 54.5" fill="none" stroke="#222" stroke-width="0.60" stroke-linecap="round" stroke-linejoin="round"/>
<path d="M116.1 52.0 Q118.6 56.4 122.4 56.4 L126.2 56.4" fill="none" stroke="#222" stroke-width="0.60" stroke-linecap="round" stroke-linejoin="round"/>
<path d="M167.6 49.5 L174.2 49.5" fill="none" stroke="#222" stroke-width="0.60" stroke-linecap="round" stroke-linejoin="round"/>
<path d="M45.0 56.0 L45.7 115.7" fill="none" stroke="#222" stroke-width="0.94" stroke-linecap="round" stroke-linejoin="round"/>
<path d="M49.9 57.9 L50.5 96.2" fill="none" stroke="#666" stroke-width="0.60" stroke-linecap="round" stroke-linejoin="round"/>
<path d="M47.3 101.4 L47.9 115.7" fill="none" stroke="#777" stroke-width="0.60" stroke-linecap="round" stroke-linejoin="round"/>
<path d="M33.0 58.6 Q33.3 64.4 35.8 66.7 Q38.2 69.0 41.8 71.2 L45.3 73.5" fill="none" stroke="#222" stroke-width="0.66" stroke-linecap="round" stroke-linejoin="round"/>
<path d="M39.5 57.9 L40.2 62.5" fill="none" stroke="#222" stroke-width="0.60" stroke-linecap="round" stroke-linejoin="round"/>
<path d="M42.1 56.0 L42.7 70.3" fill="none" stroke="#222" stroke-width="0.60" stroke-linecap="round" stroke-linejoin="round"/>
<path d="M11.0 56.0 Q7.7 62.5 6.1 66.7 Q4.5 70.9 2.5 72.2 L0.6 73.5" fill="none" stroke="#222" stroke-width="0.60" stroke-linecap="round" stroke-linejoin="round"/>
<path d="M0.6 87.8 Q5.1 89.1 5.5 93.3 Q5.8 97.5 4.8 100.7 Q3.8 104.0 2.2 105.6 L0.6 107.2" fill="none" stroke="#222" stroke-width="0.60" stroke-linecap="round" stroke-linejoin="round"/>
<path d="M0.6 111.1 Q6.4 109.2 10.0 106.7 L13.6 104.3" fill="none" stroke="#222" stroke-width="0.60" stroke-linecap="round" stroke-linejoin="round"/>
<path d="M20.0 89.7 Q17.5 92.3 17.1 94.9 Q16.8 97.5 18.4 99.5 Q20.0 101.4 23.0 102.4 Q25.9 103.3 28.8 103.7 L31.7 104.0" fill="none" stroke="#222" stroke-width="1.32" stroke-linecap="round" stroke-linejoin="round"/>
<path d="M57.0 66.4 Q54.4 75.5 53.8 79.3 Q53.1 83.2 52.5 84.2 L51.8 85.2" fill="none" stroke="#222" stroke-width="1.50" stroke-linecap="round" stroke-linejoin="round"/>
<path d="M51.5 84.5 L52.2 84.9" fill="none" stroke="#222" stroke-width="3.76" stroke-linecap="round" stroke-linejoin="round"/>
<path d="M63.5 70.9 L66.1 67.7" fill="none" stroke="#222" stroke-width="0.75" stroke-linecap="round" stroke-linejoin="round"/>
<path d="M63.5 70.9 L64.1 75.5" fill="none" stroke="#222" stroke-width="0.94" stroke-linecap="round" stroke-linejoin="round"/>
<path d="M68.0 56.0 Q74.5 59.2 76.5 62.5 Q78.4 65.7 78.4 70.6 L78.4 75.5" fill="none" stroke="#222" stroke-width="0.75" stroke-linecap="round" stroke-linejoin="round"/>
<path d="M73.2 78.0 Q66.7 83.9 66.4 85.8 Q66.1 87.8 68.4 90.0 Q70.6 92.3 71.0 104.0 L71.3 115.7" fill="none" stroke="#222" stroke-width="0.66" stroke-linecap="round" stroke-linejoin="round"/>
<path d="M95.7 58.6 L96.1 80.6" fill="none" stroke="#222" stroke-width="0.75" stroke-linecap="round" stroke-linejoin="round"/>
<path d="M95.7 58.6 L107.4 58.3" fill="none" stroke="#222" stroke-width="0.60" stroke-linecap="round" stroke-linejoin="round"/>
<path d="M110.0 59.2 Q110.3 63.1 120.5 63.0 L130.7 62.8" fill="none" stroke="#222" stroke-width="0.60" stroke-linecap="round" stroke-linejoin="round"/>
<path d="M130.7 56.0 L130.1 72.2" fill="none" stroke="#222" stroke-width="0.94" stroke-linecap="round" stroke-linejoin="round"/>
<path d="M121.0 58.6 L121.3 74.8" fill="none" stroke="#222" stroke-width="0.60" stroke-linecap="round" stroke-linejoin="round"/>
<path d="M117.1 56.0 Q120.4 57.3 123.3 57.0 L126.2 56.6" fill="none" stroke="#222" stroke-width="0.75" stroke-linecap="round" stroke-linejoin="round"/>
<path d="M107.4 66.1 Q112.6 66.1 112.6 68.2 L112.6 70.3" fill="none" stroke="#222" stroke-width="0.60" stroke-linecap="round" stroke-linejoin="round"/>
<path d="M119.7 70.9 L120.4 98.8" fill="none" stroke="#666" stroke-width="0.60" stroke-linecap="round" stroke-linejoin="round"/>
<path d="M86.0 74.8 Q87.9 74.2 88.3 72.2 L88.6 70.3" fill="none" stroke="#222" stroke-width="0.60" stroke-linecap="round" stroke-linejoin="round"/>
<path d="M140.5 75.5 L143.1 76.1 L145.7 80.6 L143.1 81.9 L141.1 78.7Z" fill="#222"/>
<path d="M143.1 81.3 Q151.5 81.9 151.5 83.2 L151.5 84.5" fill="none" stroke="#222" stroke-width="0.75" stroke-linecap="round" stroke-linejoin="round"/>
<path d="M155.4 78.7 L156.0 88.4" fill="none" stroke="#666" stroke-width="0.60" stroke-linecap="round" stroke-linejoin="round"/>
<path d="M148.3 89.1 L150.9 88.1" fill="none" stroke="#222" stroke-width="0.75" stroke-linecap="round" stroke-linejoin="round"/>
<path d="M150.9 91.7 Q153.4 94.3 157.0 94.6 Q160.6 94.9 160.9 105.3 L161.2 115.7" fill="none" stroke="#222" stroke-width="0.60" stroke-linecap="round" stroke-linejoin="round"/>
<path d="M155.4 94.9 L155.7 115.7" fill="none" stroke="#222" stroke-width="0.60" stroke-linecap="round" stroke-linejoin="round"/>
<path d="M127.5 83.9 Q135.3 91.0 138.2 96.2 Q141.1 101.4 142.7 107.2 Q144.4 113.1 147.9 113.7 L151.5 114.4" fill="none" stroke="#222" stroke-width="0.60" stroke-linecap="round" stroke-linejoin="round"/>
<path d="M136.6 83.9 Q143.1 88.4 145.7 93.0 Q148.3 97.5 151.5 103.7 Q154.7 109.8 155.1 112.7 L155.4 115.7" fill="none" stroke="#222" stroke-width="0.60" stroke-linecap="round" stroke-linejoin="round"/>
<path d="M123.0 89.7 Q124.3 97.5 125.2 100.1 Q126.2 102.7 125.6 104.0 Q124.9 105.3 124.6 110.5 L124.3 115.7" fill="none" stroke="#222" stroke-width="0.94" stroke-linecap="round" stroke-linejoin="round"/>
<path d="M127.5 105.3 L127.5 115.7" fill="none" stroke="#222" stroke-width="0.60" stroke-linecap="round" stroke-linejoin="round"/>
<path d="M89.2 87.8 Q92.5 86.2 93.5 86.8 L94.4 87.5" fill="none" stroke="#222" stroke-width="0.94" stroke-linecap="round" stroke-linejoin="round"/>
<path d="M96.4 87.8 L100.9 88.1" fill="none" stroke="#222" stroke-width="0.60" stroke-linecap="round" stroke-linejoin="round"/>
<path d="M100.9 91.3 L102.2 91.5" fill="none" stroke="#222" stroke-width="0.75" stroke-linecap="round" stroke-linejoin="round"/>
<path d="M95.7 93.3 L96.7 93.5" fill="none" stroke="#222" stroke-width="0.75" stroke-linecap="round" stroke-linejoin="round"/>
<path d="M102.2 93.3 L104.8 93.6" fill="none" stroke="#222" stroke-width="0.60" stroke-linecap="round" stroke-linejoin="round"/>
<path d="M106.8 94.9 L110.6 95.6" fill="none" stroke="#222" stroke-width="1.32" stroke-linecap="round" stroke-linejoin="round"/>
<path d="M105.5 86.5 Q107.4 85.2 111.6 85.3 L115.8 85.5" fill="none" stroke="#222" stroke-width="0.60" stroke-linecap="round" stroke-linejoin="round"/>
<path d="M97.0 111.1 L97.3 115.7" fill="none" stroke="#222" stroke-width="0.60" stroke-linecap="round" stroke-linejoin="round"/>
<path d="M150.9 62.5 Q154.1 65.7 157.7 65.4 L161.2 65.1" fill="none" stroke="#222" stroke-width="0.75" stroke-linecap="round" stroke-linejoin="round"/>
<path d="M159.3 58.6 Q165.1 59.9 164.5 61.5 Q163.8 63.1 161.6 62.8 L159.3 62.5" fill="none" stroke="#222" stroke-width="0.60" stroke-linecap="round" stroke-linejoin="round"/>
<path d="M144.4 72.2 L150.9 71.9" fill="none" stroke="#777" stroke-width="0.75" stroke-linecap="round" stroke-linejoin="round"/>
<path d="M163.8 57.9 L173.9 57.9" fill="none" stroke="#222" stroke-width="0.60" stroke-linecap="round" stroke-linejoin="round"/>
</g></svg>


<!-- row number -->
<div class="lb serif" style="left:259px;top:542px;font-size:20px" id="rn">1</div>

<!-- row 2 -->
<div class="lb serif" style="left:309px;top:508px;width:84px" id="l2a">작품</div>
<div class="lb serif" style="left:309px;top:541px;width:84px" id="l2b">설명</div>
<div class="bt serif" style="left:405px;top:476px;width:783px" id="b1">김현우 작가는 오전에는 매우 세밀하고 정교한 픽셀 작업을 주로 합니다. 그리고 오후에는</div>
<div class="bt serif" style="left:405px;top:509px;width:783px" id="b2">자유로운 움직임으로 실험적인 페인팅 작업을 합니다. 이 작업은 작가가 좋아하는 음악에 맞</div>
<div class="bt serif" style="left:405px;top:542px;width:783px" id="b3">추어 춤을 추듯이 완성한 작업으로 어떠한 틀에도 얽매이지 않고 자유롭게 작업하는 작가의</div>
<div class="bt serif" style="left:405px;top:573.5px;width:376px" id="b4">몸과 마음을 순간에 모두 담아낸 작품입니다.</div>

<!-- row 3 -->
<div class="lb serif" style="left:309px;top:648.500px;width:84px" id="l3a">작가</div>
<div class="lb serif" style="left:309px;top:681px;width:84px" id="l3b">소개</div>
<div class="bt serif" style="left:405px;top:601px;width:783px" id="c1">스스로를 <span style="padding-left:7px">‘</span>픽셀 킴<span style="padding-right:9px">’</span>이라 부르는 김현우 작가는 세상의 모습들, 겪었던 삶의 순간들을 픽셀</div>
<div class="bt serif" style="left:405px;top:633.5px;width:783px" id="c2">로 재구성한다. 드로잉과 기록에 기반해 수학 기호와 음표, 글자 등을 이미지로 담아내며 평</div>
<div class="bt serif" style="left:405px;top:666px;width:783px" id="c3">면과 입체, 음악, 낭독, 퍼포먼스로 확장하는 작업을 한다. 개인전 <span class="nb">《픽셀:</span> 무한한 <span class="nb">공간<span class="rq">》</span>(신</span></div>
<div class="bt serif" style="left:405px;top:699px;width:783px" id="c4">한갤러리, 2021), <span class="nb">《나는</span> 직관적인 노래를 잘 <span class="nb">부릅니다<span class="rq">》</span>(책,</span> 2021), 단체전 <span class="nb">《길은</span> 너무나 길</div>
<div class="bt serif" style="left:405px;top:730px;width:630px" id="c5">고 종이는 조그맣기 <span class="nb">때문에<span class="rq">》</span>(서울시립</span> 북서울미술관, 2021) 등에 참여했다.</div>

<!-- row 4 -->
<div class="lb serif" style="left:309px;top:803.5px;width:84px;letter-spacing:1.6px;text-indent:1.6px" id="n2">정은혜</div>
<div class="lb serif" style="left:405px;top:803.5px;letter-spacing:1.4px" id="g2">서양화</div>
<!-- PAINTING2 -->
<svg style="left:494px;top:754px;overflow:hidden" width="174" height="115" viewBox="0 0 174 115"><defs><clipPath id="p2c"><rect width="174" height="115"/></clipPath><filter id="p2f2" x="-20%" y="-20%" width="140%" height="140%"><feGaussianBlur stdDeviation="2.5"/></filter><filter id="p2f1" x="-20%" y="-20%" width="140%" height="140%"><feGaussianBlur stdDeviation="1"/></filter></defs><g clip-path="url(#p2c)">
<rect width="174" height="115" fill="#f0883e"/>
<path d="M0.0 0.0 L37.5 0.0 L36.2 34.1 L26.8 69.0 L0.0 74.3Z" fill="#f7c52c" opacity="1" filter="url(#p2f2)"/>
<path d="M0.0 32.8 Q0.0 7.4 5.4 6.0 Q10.7 4.7 12.1 26.1 Q13.4 47.5 6.7 52.9 Q0.0 58.2 0.0 32.8Z" fill="#fbe23a" opacity="0.9" filter="url(#p2f2)"/>
<path d="M24.1 20.4 Q22.8 0.0 29.5 0.0 Q36.2 0.0 35.5 19.1 Q34.8 38.2 30.1 39.5 Q25.4 40.8 24.1 20.4Z" fill="#f2952e" opacity="0.8" filter="url(#p2f2)"/>
<path d="M36.8 10.4 Q36.2 0.0 69.6 0.0 Q103.1 0.0 101.1 10.4 Q99.1 20.8 92.4 24.8 Q85.7 28.8 67.0 28.8 Q48.2 28.8 42.8 24.8 Q37.5 20.8 36.8 10.4Z" fill="#dca862" opacity="1" filter="url(#p2f2)"/>
<path d="M57.6 8.7 Q56.2 2.0 73.6 2.7 Q91.1 3.3 88.4 10.0 Q85.7 16.7 72.3 16.1 Q58.9 15.4 57.6 8.7Z" fill="#cfae68" opacity="0.8" filter="url(#p2f2)"/>
<path d="M103.1 0.0 L173.8 0.0 L173.8 114.5 L164.7 114.5 L164.7 60.9 L146.0 20.8 L125.9 11.4 L103.1 14.1Z" fill="#f27a52" opacity="1" filter="url(#p2f2)"/>
<path d="M125.9 5.7 Q112.5 0.0 143.1 0.0 Q173.8 0.0 173.8 10.4 Q173.8 20.8 156.5 16.1 Q139.3 11.4 125.9 5.7Z" fill="#f78a78" opacity="0.8" filter="url(#p2f2)"/>
<path d="M159.3 48.2 Q152.7 27.5 163.2 26.1 Q173.8 24.8 173.8 49.5 Q173.8 74.3 169.9 71.6 Q166.0 69.0 159.3 48.2Z" fill="#f3905e" opacity="0.9" filter="url(#p2f2)"/>
<path d="M164.7 74.3 L173.8 74.3 L173.8 114.5 L164.7 114.5Z" fill="#ea7434" opacity="1" filter="url(#p2f1)"/>
<path d="M0.0 79.7 L32.1 95.7 L30.8 114.5 L0.0 114.5Z" fill="#9c6a48" opacity="1" filter="url(#p2f1)"/>
<path d="M0.0 75.7 Q0.0 69.0 3.3 71.6 Q6.7 74.3 5.4 78.3 Q4.0 82.4 2.0 82.4 Q0.0 82.4 0.0 75.7Z" fill="#d07a2a" opacity="1" filter="url(#p2f1)"/>
<path d="M58.9 47.5 Q45.5 44.9 44.2 38.2 Q42.8 31.5 46.9 26.1 Q50.9 20.8 60.3 18.1 Q69.6 15.4 79.0 17.7 Q88.4 20.1 91.1 26.4 Q93.7 32.8 92.4 38.8 Q91.1 44.9 81.7 47.5 Q72.3 50.2 58.9 47.5Z" fill="#8c6236" opacity="1" stroke="#4a3018" stroke-width="0.5"/>
<path d="M48.2 38.2 Q49.5 27.5 55.6 23.4 Q61.6 19.4 69.6 19.1 Q77.7 18.7 83.0 21.8 L88.4 24.8" fill="none" stroke="#a57a48" stroke-width="2.28" stroke-linecap="round" stroke-linejoin="round" opacity="0.6"/>
<path d="M50.9 38.0 Q50.9 32.1 58.9 30.6 Q67.0 29.1 76.3 29.6 Q85.7 30.1 87.8 34.8 Q90.0 39.5 87.2 44.2 Q84.4 48.9 78.3 51.0 Q72.3 53.2 65.6 52.5 Q58.9 51.8 54.9 47.8 Q50.9 43.8 50.9 38.0Z" fill="#efd3ae" opacity="1" stroke="#3a2a1a" stroke-width="0.5"/>
<path d="M92.4 28.8 Q91.1 22.1 97.1 18.7 Q103.1 15.4 114.5 14.2 Q125.9 13.0 132.2 15.5 Q138.6 18.1 141.7 23.4 Q144.9 28.8 147.1 38.2 Q149.3 47.5 157.3 55.6 Q165.4 63.6 165.2 69.3 Q165.0 75.0 160.8 72.0 Q156.7 69.0 150.6 71.1 Q144.6 73.2 135.2 71.4 Q125.9 69.6 121.2 73.6 Q116.5 77.7 114.5 79.0 Q112.5 80.3 110.3 74.7 Q108.2 69.0 105.5 62.9 Q102.8 56.9 98.3 46.2 Q93.7 35.5 92.4 28.8Z" fill="#8a5e3a" opacity="1" stroke="#4a3018" stroke-width="0.5"/>
<path d="M125.9 15.4 Q136.6 28.8 138.6 38.2 Q140.6 47.5 146.6 55.6 L152.7 63.6" fill="none" stroke="#a87848" stroke-width="3.19" stroke-linecap="round" stroke-linejoin="round" opacity="0.7"/>
<path d="M120.5 56.9 Q125.9 66.3 132.6 67.6 L139.3 69.0" fill="none" stroke="#6e4526" stroke-width="2.28" stroke-linecap="round" stroke-linejoin="round" opacity="0.7"/>
<path d="M95.2 39.1 Q94.0 33.1 96.5 28.4 Q99.1 23.7 105.8 22.9 Q112.5 22.1 119.8 24.9 Q127.2 27.7 129.4 32.9 Q131.5 38.2 130.0 43.0 Q128.5 47.8 124.5 51.2 Q120.5 54.5 115.2 55.8 Q109.8 57.2 105.8 55.2 Q101.8 53.2 99.1 49.1 Q96.4 45.1 95.2 39.1Z" fill="#f4dccf" opacity="1" stroke="#3a2a1a" stroke-width="0.5"/>
<path d="M36.2 44.9 L50.9 46.5 L61.6 53.2 L85.7 53.2 L94.0 63.6 L99.1 87.7 L106.1 101.1 L105.8 114.5 L30.8 114.5 L32.1 95.7 L9.4 87.7 L1.3 77.0 L12.1 56.9 L25.4 47.5Z" fill="#ef8a3a" opacity="1" stroke="#5a3a14" stroke-width="0.5"/>
<path d="M36.2 44.9 L48.2 47.8 L56.2 69.0 L58.9 77.3 L45.5 87.7 L32.1 95.7 L9.4 87.7 L1.3 77.0 L12.1 56.9 L25.4 47.5Z" fill="#dc8030" opacity="1" stroke="#5a3a14" stroke-width="0.5"/>
<path d="M65.6 71.6 Q58.9 55.6 72.3 54.9 Q85.7 54.2 89.7 60.3 Q93.7 66.3 95.7 77.0 Q97.8 87.7 101.1 101.1 Q104.4 114.5 85.7 114.5 Q67.0 114.5 69.6 101.1 Q72.3 87.7 65.6 71.6Z" fill="#f59c52" opacity="0.8" filter="url(#p2f1)"/>
<path d="M32.1 95.7 L45.5 87.7 L56.2 99.8 L85.7 99.8 L101.8 93.1 L105.8 114.5 L30.8 114.5Z" fill="#ee8436" opacity="0.9"/>
<path d="M32.1 95.7 Q48.2 99.8 67.0 99.8 Q85.7 99.8 93.1 97.8 L100.4 95.7" fill="none" stroke="#7a4a18" stroke-width="0.68" stroke-linecap="round" stroke-linejoin="round" opacity="0.8"/>
<path d="M12.1 56.9 L25.4 74.3 L32.1 58.2 L36.2 74.3 L42.8 51.6" fill="none" stroke="#7a4a18" stroke-width="0.68" stroke-linecap="round" stroke-linejoin="round" opacity="0.7"/>
<path d="M8.0 79.7 L32.1 79.7 L48.2 87.7 L57.6 75.7" fill="none" stroke="#7a4a18" stroke-width="0.68" stroke-linecap="round" stroke-linejoin="round" opacity="0.7"/>
<path d="M9.4 87.7 L30.8 86.4" fill="none" stroke="#7a4a18" stroke-width="0.68" stroke-linecap="round" stroke-linejoin="round" opacity="0.7"/>
<path d="M75.0 79.7 L72.3 99.8" fill="none" stroke="#d9772c" stroke-width="1.37" stroke-linecap="round" stroke-linejoin="round" opacity="0.6"/>
<path d="M12.1 52.9 L22.8 41.1 L36.2 38.2 L45.8 43.8 L32.1 46.5 L31.1 50.9 L27.0 48.6 L25.2 55.8 L21.2 49.5 L17.4 52.9 L13.4 56.9Z" fill="#ebe9e2" opacity="1" stroke="#5a5040" stroke-width="0.5"/>
<path d="M14.7 93.3 L32.1 91.7 L29.7 97.3 L17.4 97.3Z" fill="#f3de9c" opacity="1" stroke="#5a3a14" stroke-width="0.5"/>
<path d="M99.4 104.4 Q98.4 101.1 102.1 100.8 Q105.8 100.4 105.8 103.4 Q105.8 106.5 103.1 107.1 Q100.4 107.8 99.4 104.4Z" fill="#f3c9a0" opacity="1" stroke="#5a3a14" stroke-width="0.5"/>
<path d="M85.7 54.5 L96.4 51.8 L103.1 56.9 L108.5 69.0 L114.1 81.3 L109.8 87.7 L99.1 79.7 L95.1 69.0 L91.1 61.6Z" fill="#e3e6ec" opacity="1" stroke="#6a7080" stroke-width="0.5"/>
<path d="M113.1 81.7 L125.9 73.2 L144.6 73.2 L156.9 63.9 L162.3 74.3 L163.6 85.3 L125.9 89.3 L109.8 88.0Z" fill="#e1e4ea" opacity="1" stroke="#6a7080" stroke-width="0.5"/>
<path d="M93.7 69.0 L107.1 66.3" fill="none" stroke="#8aa0c0" stroke-width="0.46" stroke-linecap="round" stroke-linejoin="round" opacity="0.8"/>
<path d="M125.9 79.7 L152.7 69.0" fill="none" stroke="#8aa0c0" stroke-width="0.46" stroke-linecap="round" stroke-linejoin="round" opacity="0.8"/>
<path d="M132.6 86.4 L159.3 77.0" fill="none" stroke="#8aa0c0" stroke-width="0.46" stroke-linecap="round" stroke-linejoin="round" opacity="0.8"/>
<path d="M87.4 51.6 Q86.4 48.9 90.7 47.9 Q95.1 46.9 96.4 49.2 Q97.8 51.6 93.1 52.9 Q88.4 54.2 87.4 51.6Z" fill="#f0d0b0" opacity="1" stroke="#3a2a1a" stroke-width="0.5"/>
<path d="M105.8 87.7 L125.9 89.3 L163.6 85.3 L166.0 114.5 L112.5 114.5 L107.4 101.1Z" fill="#47228c" opacity="1"/>
<path d="M137.9 103.1 Q133.9 91.7 143.3 90.7 Q152.7 89.7 156.7 102.1 Q160.7 114.5 151.3 114.5 Q141.9 114.5 137.9 103.1Z" fill="#6a38b4" opacity="0.8" filter="url(#p2f1)"/>
<path d="M119.2 106.5 Q117.8 98.4 122.5 97.1 Q127.2 95.7 129.2 105.1 Q131.2 114.5 125.9 114.5 Q120.5 114.5 119.2 106.5Z" fill="#5a2ca0" opacity="0.8" filter="url(#p2f1)"/>
<path d="M52.5 34.1 L64.9 33.3" fill="none" stroke="#2a1c14" stroke-width="1.14" stroke-linecap="round" stroke-linejoin="round" opacity="1"/>
<path d="M72.3 33.9 L84.6 33.1" fill="none" stroke="#2a1c14" stroke-width="1.14" stroke-linecap="round" stroke-linejoin="round" opacity="1"/>
<path d="M65.9 34.1 L61.6 41.6 L72.6 41.6" fill="none" stroke="#2a1c14" stroke-width="0.68" stroke-linecap="round" stroke-linejoin="round" opacity="1"/>
<path d="M59.6 44.6 L74.3 44.6" fill="none" stroke="#a0203a" stroke-width="1.37" stroke-linecap="round" stroke-linejoin="round" opacity="1"/>
<path d="M95.1 34.1 L107.4 34.1" fill="none" stroke="#2a1c14" stroke-width="1.14" stroke-linecap="round" stroke-linejoin="round" opacity="1"/>
<path d="M115.2 34.9 L127.5 35.8" fill="none" stroke="#2a1c14" stroke-width="1.14" stroke-linecap="round" stroke-linejoin="round" opacity="1"/>
<path d="M107.4 34.1 L105.2 43.8 L112.7 43.8" fill="none" stroke="#2a1c14" stroke-width="0.68" stroke-linecap="round" stroke-linejoin="round" opacity="1"/>
<path d="M99.8 47.7 Q97.8 46.2 107.8 46.5 Q117.8 46.7 115.5 48.6 Q113.1 50.5 107.5 49.8 Q101.8 49.1 99.8 47.7Z" fill="#8a2030" opacity="1"/>
<path d="M100.7 47.3 L114.5 47.8" fill="none" stroke="#f4efe8" stroke-width="1.14" stroke-linecap="round" stroke-linejoin="round" opacity="1"/>
<path d="M132.6 32.8 L132.6 40.8" fill="none" stroke="#e0dcd4" stroke-width="1.14" stroke-linecap="round" stroke-linejoin="round" opacity="1"/>
<path d="M135.9 32.1 L135.9 40.2" fill="none" stroke="#e0dcd4" stroke-width="0.91" stroke-linecap="round" stroke-linejoin="round" opacity="1"/>
</g></svg>


<!-- row 5 -->
<div class="lb serif" style="left:309px;top:876px;width:84px" id="l5a">작품</div>
<div class="lb serif" style="left:309px;top:908px;width:84px" id="l5b">설명</div>
<div class="bt serif" style="left:405px;top:877px;width:783px" id="d1">은혜 작가가 출연한 드라마 우리들의 블루스의 영희(정은혜) 영옥(한지민)의 모습입니다. 첫</div>
<div class="bt serif" style="left:405px;top:909px;width:650px" id="d2">촬영이 있던 날 두 사람이 촬영장에서 친근한 모습을 작품에 담아내었습니다.</div>

</div></div>
<!-- /PAGE-CONTENT -->

<!-- RIGHT-PANEL -->
<style>
.rpi{position:absolute;left:1495.5px;white-space:nowrap;line-height:1;font-size:14px;color:#505050;letter-spacing:0.9px}
.lt{letter-spacing:-1.3px}
</style>
<div class="abs" style="left:1443px;top:112px;width:257px;height:49px;background:#f5f5f5"></div>
<div class="abs" style="left:1456px;top:309px;width:231px;height:35px;background:#f7f7f7"></div>
<div class="abs" style="left:1456px;top:429px;width:231px;height:35px;background:#f7f7f7"></div>

<div class="abs" style="left:1443px;top:161px;width:257px;height:1px;background:#dcdcdc"></div>
<div class="abs" style="left:1456px;top:258px;width:231px;height:26px;border-radius:13px;background:#2680eb"></div>
<div class="abs" style="left:1456px;top:870px;width:231px;height:1px;background:#d0d0d0;display:none"></div>
<div class="rpi ui" style="top:136px;letter-spacing:1.5px" id="rp0"><span class="lt">PDF</span> 내보내기</div>
<div class="t ui" style="left:1456px;top:184px;font-size:13px;font-weight:500;color:#2c2c2c;letter-spacing:0.2px" id="rpa">Adobe Acrobat Pro DC</div>
<div class="t ui" style="left:1456px;top:207.5px;font-size:11px;color:#4b4b4b;letter-spacing:0.4px;line-height:14.500px;white-space:normal;width:240px" id="rpb">온라인으로 PDF 파일을 Word 또는 Excel<br>로 변환</div>
<div class="t ui" style="left:1456px;top:264px;width:231px;text-align:center;font-size:14px;color:#fff;letter-spacing:0.3px" id="rpc">추가 정보</div>
<div class="rpi ui" style="top:320px" id="rp1"><span class="lt">PDF</span> 작성</div>
<div class="rpi ui" style="top:360px" id="rp2"><span class="lt">PDF</span> 편집</div>
<div class="rpi ui" style="top:400px;letter-spacing:2.5px" id="rp3">주석</div>
<div class="rpi ui" style="top:440px" id="rp4">파일 결합</div>
<div class="rpi ui" style="top:480px;letter-spacing:2.5px" id="rp5">교정</div>
<div class="rpi ui" style="top:520px;letter-spacing:2.5px" id="rp6">보호</div>
<div class="rpi ui" style="top:562px" id="rp7"><span class="lt">PDF</span> 최적화</div>
<div class="rpi ui" style="top:602px" id="rp8">채우기 및 서명</div>
<div class="rpi ui" style="top:643px" id="rp9">검토를 위해 보내기</div>
<div class="rpi ui" style="top:684px" id="rp10">추가 도구</div>
<div class="t ui" style="left:1443px;top:868px;width:257px;text-align:center;font-size:11px;font-weight:700;color:#2c2c2c;letter-spacing:0.65px" id="rpd">Document Cloud에서 문서 저장 및 공유</div>
<div class="t ui" style="left:1443px;top:890px;width:257px;text-align:center;font-size:11px;color:#1b6fd0" id="rpe">추가 정보</div>
<!-- RP-ICONS -->
<svg style="left:1442px;top:112px" width="258" height="808" viewBox="1442 112 258 808">
  <!-- export pdf -->
  <path d="M1469 134.600h8.400l4.600 4.600v5.200M1478.400 151.600H1469z M1469 134.600V151.600h6" fill="#d6efee" stroke="none"/>
  <path d="M1477 151.600h-8V134.600h8.200l4.800 4.800v4.400" fill="#d6efee" stroke="#199a98" stroke-width="1.900" stroke-linejoin="round"/>
  <path d="M1477 134.800v4.800h4.800" fill="none" stroke="#199a98" stroke-width="1.600"/>
  <path d="M1476.600 148h6.400" stroke="#199a98" stroke-width="2.200"/>
  <path d="M1481.600 144l4.600 4-4.600 4z" fill="#199a98"/>
  <path d="M1476.600 145.600v2.400" stroke="#199a98" stroke-width="2.200"/>
  <!-- chevrons -->
  <path d="M1668.400 146.400l5.200-5 5.200 5" fill="none" stroke="#3a3a3a" stroke-width="1.900"/>
  <path d="M1668.400 324.200l5.200 5 5.200-5" fill="none" stroke="#3a3a3a" stroke-width="1.900"/>
  <path d="M1668.400 444.600l5.200 5 5.200-5" fill="none" stroke="#3a3a3a" stroke-width="1.900"/>
  <!-- small copy icon -->
  <rect x="1673.500" y="180.500" width="6" height="7.500" fill="none" stroke="#b5b5b5" stroke-width="1" stroke-dasharray="1.500 1"/>
  <path d="M1680 184.500h4l2.500 2.500v5h-6.500z" fill="#fafafa" stroke="#a8a8a8" stroke-width="1"/>
  <!-- create pdf -->
  <path d="M1470 326v8h13.200v-12.600l-4-4h-5.600" fill="#fadcdf" stroke="#e24a52" stroke-width="1.700" stroke-linejoin="round"/>
  <path d="M1479 317.600v4h4" fill="none" stroke="#e24a52" stroke-width="1.400"/>
  <rect x="1466" y="319.400" width="8.400" height="6.600" rx="1.800" fill="#e24a52"/>
  <!-- edit pdf -->
  <rect x="1466.800" y="358" width="18.400" height="7.800" rx="1" fill="#f7d3e6" stroke="#d8368f" stroke-width="1.700"/>
  <rect x="1466.800" y="368.400" width="7.200" height="6.400" rx="0.800" fill="#f7d3e6" stroke="#d8368f" stroke-width="1.700"/>
  <path d="M1477.400 369.800h8.600 M1477.400 373h8.600" stroke="#d8368f" stroke-width="1.200"/>
  <!-- comment -->
  <path d="M1468.400 398h15.400q1.400 0 1.400 1.400v10.200q0 1.400-1.400 1.400h-7.400l-4.200 5.200v-5.200h-3.800q-1.400 0-1.400-1.400v-10.200q0-1.400 1.400-1.400z" fill="#dbb823"/>
  <path d="M1471.600 402.800h9.200 M1471.600 405.800h9.200" stroke="#fff" stroke-width="1.400"/>
  <!-- combine -->
  <path d="M1468 450v-9.800h6.600l1.600 1.600v8.200z" fill="#dedbfb" stroke="#6a5af0" stroke-width="1.500" stroke-linejoin="round"/>
  <path d="M1478.400 440.200h5l2.800 2.800v7h-6.400" fill="#fafafa" stroke="#6a5af0" stroke-width="1.500" stroke-linejoin="round"/>
  <rect x="1465" y="441.200" width="3.800" height="3.800" rx="1.200" fill="#6a5af0"/>
  <path d="M1476.200 447v6" stroke="#6a5af0" stroke-width="2"/>
  <path d="M1471.800 452.400h8.800l-4.400 5.600z" fill="#6a5af0"/>
  <path d="M1471 443h3 M1471 445.600h3" stroke="#6a5af0" stroke-width="0.900"/>
  <!-- redact -->
  <path d="M1470.200 492l10.800-12.400c1.600-1.800 4.600.6 3.200 2.600l-9.600 11.800z" fill="#f7d3e6" stroke="#d8368f" stroke-width="1.700" stroke-linejoin="round"/>
  <path d="M1466 495h20v-4.400h-9.600l-2.800 2.600-3.600-1.600z" fill="#d8368f"/>
  <!-- protect -->
  <path d="M1468.600 520.200q7.200-3.400 14.400 0v8q0 6-7.200 9.200q-7.200-3.200-7.200-9.200z" fill="#e2e0fb" stroke="#6a5af0" stroke-width="1.800" stroke-linejoin="round"/>
  <path d="M1475.800 519v18" stroke="none"/>
  <!-- optimize -->
  <path d="M1471.400 566v6.400h11.600v-10.600l-3.400-3.400h-5.200" fill="#fadcdf" stroke="#e0343c" stroke-width="1.600" stroke-linejoin="round"/>
  <path d="M1479.400 558.600v3.400h3.400" fill="none" stroke="#e0343c" stroke-width="1.200"/>
  <rect x="1468" y="560.200" width="7.200" height="5.800" rx="1.600" fill="#e0343c"/>
  <path d="M1468 576.800h17" stroke="#e0343c" stroke-width="1.500"/>
  <circle cx="1479.400" cy="576.800" r="1.500" fill="#fafafa" stroke="#e0343c" stroke-width="1"/>
  <!-- fill & sign -->
  <path d="M1467.400 617.400l2-6 9.200-10.200c1.400-1.600 4.200.6 2.800 2.400l-8.800 10.600z" fill="#ecdcfa" stroke="#9a4fe0" stroke-width="1.700" stroke-linejoin="round"/>
  <path d="M1474.600 616.400c2-3.600 4.400-4.200 3.800-1.800c-.4 1.800.6 2.400 2 .8c1.400-1.400 2.400-1.200 2.200.4c0 1.200 1.800 1.400 3.600.2" fill="none" stroke="#9a4fe0" stroke-width="1.600" stroke-linecap="round"/>
  <!-- send for review -->
  <path d="M1467.200 640v17.600h8.800v-5.600h7.200v-7.400l-4.600-4.600z" fill="#f8efc8" stroke="#dcbb1c" stroke-width="1.700" stroke-linejoin="round"/>
  <path d="M1478.400 640.400v4.400h4.600" fill="none" stroke="#dcbb1c" stroke-width="1.400"/>
  <path d="M1477.400 650.800h8.200v7h-5.400l-1.600 1.800v-1.800h-1.200z" fill="#dcbb1c" stroke="#dcbb1c" stroke-width="1"/>
  <path d="M1479.400 653.200h4.200 M1479.400 655.400h4.200" stroke="#fff" stroke-width="0.900"/>
  <!-- more tools -->
  <path d="M1467.400 697.600l10-9.600" stroke="#666" stroke-width="3.400" stroke-linecap="round"/>
  <path d="M1476 683.200a4.600 4.600 0 1 0 5.800 5.800l-3.200.8-2.800-2.800z" fill="#666" stroke="#666" stroke-width="1"/>
  <circle cx="1481" cy="695.600" r="4.600" fill="#666" stroke="#fafafa" stroke-width="1"/>
  <path d="M1478.600 695.600h4.800 M1481 693.200v4.800" stroke="#fff" stroke-width="1.300"/>
  <!-- bottom separator -->
  <path d="M1456 849.500h231" stroke="#d4d4d4" stroke-width="1"/>
  <!-- strip arrows -->
  <path d="M1432 513v7l5-3.500z" fill="#666"/>
  
  <!-- scrollbar arrows -->
  <path d="M1416 122.600l3.200-3.400 3.200 3.400" fill="none" stroke="#444" stroke-width="1.400"/>
  <path d="M1416 911.800l3.200 3.400 3.200-3.400" fill="none" stroke="#444" stroke-width="1.400"/>
</svg>
<svg style="left:0;top:112px" width="56" height="808" viewBox="0 112 56 808">
  <path d="M50.200 513v7l-5-3.500z" fill="#666"/>
  <!-- pages icon -->
  <path d="M16.500 133.500h6.400l4.200 4.200v9.400h-10.600z" fill="none" stroke="#6a6a6a" stroke-width="1.500" stroke-linejoin="round"/>
  <path d="M22.700 133.700v4.200h4.200" fill="none" stroke="#6a6a6a" stroke-width="1.200"/>
  <path d="M16.500 136.500h-3.800v14.200h10.400v-3.400" fill="none" stroke="#6a6a6a" stroke-width="1.500" stroke-linejoin="round"/>
  <!-- paperclip -->
  <path d="M24.600 178.400l-8.400 8.400c-1.600 1.600-4-.6-2.400-2.400l7.800-7.800c2.600-2.600 6.400 1 3.800 3.800l-8.600 8.600c-3.600 3.600-8.600-1.400-5-5l7.200-7.200" fill="none" stroke="#6a6a6a" stroke-width="1.500" stroke-linecap="round"/>
</svg>
<!-- /RP-ICONS -->

<!-- TASKBAR -->
<div class="abs" id="taskbar"></div>
<!-- TASKBAR-ITEMS -->
<svg style="left:0;top:921px" width="1700" height="35" viewBox="0 921 1700 35">
  <defs>
    <linearGradient id="tbg" x1="0" y1="0" x2="1" y2="0"><stop offset="0" stop-color="#1e343f"/><stop offset="0.5" stop-color="#1d2f42"/><stop offset="1" stop-color="#1b2944"/></linearGradient>
    <linearGradient id="edg" x1="0" y1="0" x2="1" y2="1"><stop offset="0" stop-color="#35c1f1"/><stop offset="0.5" stop-color="#1b9de2"/><stop offset="1" stop-color="#0c59a4"/></linearGradient>
    <linearGradient id="edg2" x1="0" y1="0" x2="1" y2="0"><stop offset="0" stop-color="#2fc2df"/><stop offset="1" stop-color="#6fdc4c"/></linearGradient>
  </defs>
  <rect x="0" y="921" width="1700" height="35" fill="url(#tbg)"/>
  <!-- active app highlight -->
  <rect x="304" y="921" width="42" height="35" fill="#41535f"/>
  <!-- running indicators -->
  <g fill="#7cb7ea">
    <rect x="134" y="954" width="27" height="2"/><rect x="162.500" y="954" width="6" height="2" fill="#5e93c4"/>
    <rect x="220" y="954" width="28" height="2"/><rect x="249.500" y="954" width="6" height="2" fill="#5e93c4"/>
    <rect x="264" y="954" width="35" height="2"/>
    <rect x="304" y="954" width="42" height="2"/>
    <rect x="351" y="954" width="35" height="2"/>
  </g>
  <!-- windows logo -->
  <g fill="#fff">
    <path d="M13.600 933.200l6-.900v5.900h-6z M20.600 932.200l7.600-1.100v7.100h-7.600z M13.600 939.200h6v5.800l-6-.900z M20.600 939.200h7.600v7l-7.600-1.100z"/>
  </g>
  <!-- search -->
  <circle cx="66.400" cy="935.200" r="5" fill="none" stroke="#fff" stroke-width="1.500"/>
  <path d="M62.800 938.800l-5 5.400" stroke="#fff" stroke-width="1.700" stroke-linecap="round"/>
  <!-- task view -->
  <rect x="100.500" y="934" width="8" height="7.500" fill="none" stroke="#fff" stroke-width="1.300"/>
  <path d="M99 931.500h11 M99 944h11" stroke="#fff" stroke-width="1.300"/>
  <rect x="111" y="935.500" width="1.600" height="1.600" fill="#fff"/>
  <!-- edge -->
  <circle cx="151.800" cy="937.800" r="10.600" fill="url(#edg)"/>
  <path d="M142 934.500c2-5.500 8-8.500 13.500-6.800c4.500 1.400 7.400 5.400 6.800 9.300c-.5 3-3.500 4.200-6.300 3.200c1.500-1.500 1.200-4.200-1.300-5.500c-3.600-1.800-9.200-.8-12.700 3.800z" fill="url(#edg2)"/>
  <path d="M147.500 940c.2 4 3.600 7 8 7c2 0 3.800-.600 5-1.500c-2.200 2.600-5.600 3.600-9 3c-4.400-.900-7.600-4.300-8.500-8c1-1.600 2.700-2.400 4.500-2.500z" fill="#0e4f9a" opacity="0.850"/>
  <!-- folder -->
  <path d="M185 931.600q0-1.400 1.400-1.400h5l1.800 1.800h10.200q1.400 0 1.400 1.400v11.200q0 1-1 1h-17.800q-1 0-1-1z" fill="#e9a82a"/>
  <rect x="185" y="933.800" width="19.800" height="11.800" rx="1" fill="#fbd04e"/>
  <path d="M190.200 945.600v-5.200h9.400v5.200h-2.400v-2.600h-4.600v2.600z" fill="#3b8fe0"/>
  <!-- hancom -->
  <path d="M229.600 929h17.800v13.500l-4.500 4.500h-13.300q-1.600 0-1.600-1.600v-14.800q0-1.600 1.600-1.600z" fill="#1f8ed0"/>
  <path d="M233.800 943.400h8.800" stroke="#fff" stroke-width="1.400"/>
  <!-- blue bolt circle -->
  <circle cx="281" cy="938" r="10.200" fill="#1a7fe4"/>
  <path d="M282.600 930.400l-5.800 7.600 3.600 1-1.800 6.800 6.200-8.200-3.800-.800z" fill="#fff"/>
  <!-- acrobat -->
  <rect x="315.200" y="928.600" width="19.400" height="17" rx="1.200" fill="#c5161b"/>
  <rect x="315.200" y="941.600" width="19.400" height="4" rx="1" fill="#9c1014"/>
  <path d="M319.400 941.200c3-1.400 5.400-5.600 5.200-8.600c-.1-1.500-1.500-1.100-1.200.6c.6 3.200 3.400 6.200 6.200 6.600c1.400.2 1.200-1.100-.4-1c-3.200.2-7.200 1.200-9.800 2.400z" fill="none" stroke="#fff" stroke-width="1.200" stroke-linejoin="round"/>
  <!-- powerpoint -->
  <rect x="366" y="930.400" width="12.800" height="14.600" rx="0.800" fill="#f4ded6" stroke="#d35230" stroke-width="1"/>
  <path d="M369.500 934h8 M369.500 937h8 M369.500 940h8" stroke="#d35230" stroke-width="1.400"/>
  <path d="M358.800 930.400l10.600-2v19l-10.600-2z" fill="#d24726"/>
  <!-- tray chevron -->
  <path d="M1472.400 940.400l5-4.600 5 4.600" fill="none" stroke="#fff" stroke-width="1.400"/>
  <!-- network/monitor -->
  <path d="M1496.500 933.500h9.500v7.500h-9.500z" fill="none" stroke="#fff" stroke-width="1.200"/>
  <path d="M1492.500 933.500h3.500v10 M1498.500 943.800h6 M1501.500 941v2.800" fill="none" stroke="#fff" stroke-width="1.200"/>
  <!-- speaker muted -->
  <path d="M1513 936.800h2.200l3.400-3v9.600l-3.400-3h-2.200z" fill="none" stroke="#fff" stroke-width="1.100" stroke-linejoin="round"/>
  <path d="M1521.400 936.400l4 4 M1525.400 936.400l-4 4" stroke="#fff" stroke-width="1.100"/>
  <!-- ime box -->
  <rect x="1559.800" y="931.800" width="13.400" height="12.600" fill="#fff"/>
  <!-- notification -->
  <path d="M1664.500 931.500h13v9.500h-8.500l-2.500 2.600v-2.600h-2z" fill="#fff"/>
  <path d="M1667 934.600h8 M1667 937.400h8" stroke="#1c2b43" stroke-width="1"/>
  <circle cx="1677.600" cy="945.600" r="6" fill="#454545" stroke="#1c2b43" stroke-width="1"/>
</svg>
<div class="t ui" style="left:231.500px;top:929.500px;font-size:13px;font-weight:700;color:#fff" id="hnc">호</div>
<div class="t ui" style="left:366.500px;top:932.500px;font-size:0px;color:#fff"></div>
<div class="t ui" style="left:360.500px;top:931.500px;font-size:11px;font-weight:700;color:#fff;font-family:'Liberation Sans',sans-serif" id="ppt">P</div>
<div class="t ui" style="left:1534.500px;top:930.500px;font-size:16px;color:#fff;font-family:'Liberation Sans',sans-serif" id="imeA">A</div>
<div class="t ui" style="left:1560.500px;top:932px;font-size:12px;font-weight:700;color:#1a1a1a" id="imeH">한</div>
<div class="t ui" style="left:1591px;top:924.500px;font-size:11px;color:#fff;letter-spacing:0.05px" id="tm">오후 12:00</div>
<div class="t ui" style="left:1588px;top:940px;font-size:11px;color:#fff;letter-spacing:0.2px" id="dt">2022-08-30</div>
<div class="t ui" style="left:1674.600px;top:940.500px;font-size:10px;font-weight:700;color:#fff;font-family:'Liberation Sans',sans-serif" id="nb">4</div>


</body>
</html>
